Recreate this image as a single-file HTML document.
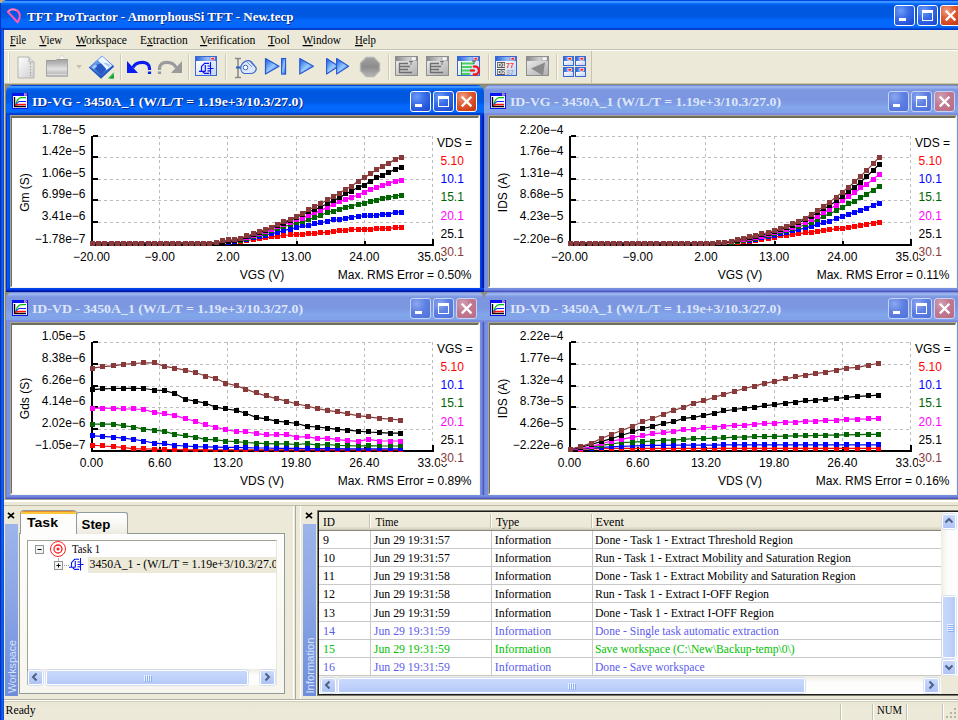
<!DOCTYPE html>
<html><head><meta charset="utf-8"><title>TFT ProTractor</title>
<style>
html,body{margin:0;padding:0}
body{width:958px;height:720px;overflow:hidden;position:relative;background:#ECE9D8;font-family:"Liberation Serif",serif;font-size:13px}
.b{position:absolute;display:block}
.t{position:absolute;line-height:1;white-space:nowrap}
u{text-decoration:underline;text-underline-offset:1px}
.g{stroke:#BCBCBC;stroke-width:1;stroke-dasharray:3 3;shape-rendering:crispEdges}
.ct{font-family:"Liberation Sans",sans-serif;font-size:12px}
svg{overflow:hidden}
</style></head>
<body>
<div class="b" style="left:0px;top:0px;width:958px;height:30px;background:linear-gradient(to bottom,#0046E0 1.67%,#3C96FF 5.00%,#3690FF 8.33%,#0A6EFC 11.67%,#0464F0 15.00%,#005CE6 18.33%,#0058E0 21.67%,#0058E0 51.67%,#005CE8 58.33%,#0264F6 65.00%,#0468FC 68.33%,#0468FE 88.33%,#0460F0 91.67%,#0044D6 95.00%,#003CCC 98.33%);border-top-left-radius:8px;"></div>
<div class="b" style="left:0px;top:0px;width:4px;height:4px;background:#BCAC7C;z-index:0"></div>
<div class="b" style="left:0px;top:0px;width:958px;height:30px;background:linear-gradient(to bottom,#0046E0 1.67%,#3C96FF 5.00%,#3690FF 8.33%,#0A6EFC 11.67%,#0464F0 15.00%,#005CE6 18.33%,#0058E0 21.67%,#0058E0 51.67%,#005CE8 58.33%,#0264F6 65.00%,#0468FC 68.33%,#0468FE 88.33%,#0460F0 91.67%,#0044D6 95.00%,#003CCC 98.33%);border-top-left-radius:7px;"></div>
<div class="b" style="left:0px;top:30px;width:4px;height:690px;background:linear-gradient(to right,#0A2FD0 0,#0A50E4 30%,#1060EC 60%,#0848D6 100%)"></div>
<div class="b" style="left:0px;top:3px;width:1px;height:717px;background:#0030C4"></div>
<svg class="b" style="left:4px;top:5px" width="20" height="20" viewBox="0 0 20 20"><path d="M3.9 6.9 L13.6 17.2 C16.4 13.2,17 8.2,12.6 5.2 C9.6 3.4,5.6 4.1,3.9 6.9 Z" fill="none" stroke="#FF58B4" stroke-width="2.1" stroke-linejoin="round"/><path d="M4.6 6.6 C6.4 4.4,9.6 4,12.2 5.6" fill="none" stroke="#FFA8D8" stroke-width="0.9"/></svg>
<div class="b" style="left:894px;top:5px;width:19px;height:19px;border:1px solid #fff;border-radius:3px;background:radial-gradient(circle at 30% 25%,#6C9CF8 0%,#3A6EE8 40%,#2454D8 75%,#1C46C4 100%);overflow:hidden"><div class="b" style="left:4px;top:12px;width:7px;height:3px;background:#fff"></div></div>
<div class="b" style="left:917px;top:5px;width:19px;height:19px;border:1px solid #fff;border-radius:3px;background:radial-gradient(circle at 30% 25%,#6C9CF8 0%,#3A6EE8 40%,#2454D8 75%,#1C46C4 100%);overflow:hidden"><div class="b" style="left:4px;top:4px;width:9px;height:7px;border:1px solid #fff;border-top-width:3px"></div></div>
<div class="b" style="left:940px;top:5px;width:19px;height:19px;border:1px solid #fff;border-radius:3px;background:radial-gradient(circle at 30% 25%,#F0A088 0%,#E0643C 35%,#D2441E 70%,#B83612 100%);overflow:hidden"><svg class="b" style="left:0;top:0" width="19" height="19"><path d="M4.8 4.8 L14.4 14.4 M14.4 4.8 L4.8 14.4" stroke="#fff" stroke-width="2.3" stroke-linecap="butt"/></svg></div>
<div class="b" style="left:4px;top:49px;width:954px;height:1px;background:#C5C2B2"></div>
<div class="b" style="left:4px;top:50px;width:954px;height:1px;background:#fff"></div>
<div class="b" style="left:591px;top:51px;width:1px;height:32px;background:#C5C2B2"></div>
<div class="b" style="left:8px;top:52px;width:1px;height:30px;background:#fff"></div>
<div class="b" style="left:9px;top:52px;width:1px;height:30px;background:#D8D4C2"></div>
<div class="b" style="left:120px;top:54px;width:1px;height:26px;background:#CFCBBA"></div>
<div class="b" style="left:121px;top:54px;width:1px;height:26px;background:#F8F7F0"></div>
<div class="b" style="left:188px;top:54px;width:1px;height:26px;background:#CFCBBA"></div>
<div class="b" style="left:189px;top:54px;width:1px;height:26px;background:#F8F7F0"></div>
<div class="b" style="left:225px;top:54px;width:1px;height:26px;background:#CFCBBA"></div>
<div class="b" style="left:226px;top:54px;width:1px;height:26px;background:#F8F7F0"></div>
<div class="b" style="left:388px;top:54px;width:1px;height:26px;background:#CFCBBA"></div>
<div class="b" style="left:389px;top:54px;width:1px;height:26px;background:#F8F7F0"></div>
<div class="b" style="left:488px;top:54px;width:1px;height:26px;background:#CFCBBA"></div>
<div class="b" style="left:489px;top:54px;width:1px;height:26px;background:#F8F7F0"></div>
<div class="b" style="left:556px;top:54px;width:1px;height:26px;background:#CFCBBA"></div>
<div class="b" style="left:557px;top:54px;width:1px;height:26px;background:#F8F7F0"></div>
<svg class="b" style="left:0;top:50px" width="958" height="34" viewBox="0 0 958 34"><defs>
<linearGradient id="gDoc" x1="0" y1="0" x2="1" y2="1"><stop offset="0" stop-color="#ffffff"/><stop offset="1" stop-color="#cdcdcd"/></linearGradient>
<linearGradient id="gGray" x1="0" y1="0" x2="0" y2="1"><stop offset="0" stop-color="#a4a4a4"/><stop offset="0.2" stop-color="#b4b4b4"/><stop offset="0.55" stop-color="#e2e2e2"/><stop offset="1" stop-color="#a8a8a8"/></linearGradient>
<linearGradient id="gBlueT" x1="0" y1="0" x2="1" y2="0"><stop offset="0" stop-color="#2a62d8"/><stop offset="0.6" stop-color="#9cc0f4"/><stop offset="1" stop-color="#3a6cd8"/></linearGradient>
<linearGradient id="gGrayT" x1="0" y1="0" x2="1" y2="0"><stop offset="0" stop-color="#8a8a8a"/><stop offset="0.6" stop-color="#d0d0d0"/><stop offset="1" stop-color="#8c8c8c"/></linearGradient>
<linearGradient id="gPlay" x1="0" y1="0" x2="0.9" y2="1"><stop offset="0" stop-color="#2458D8"/><stop offset="0.3" stop-color="#5C98F4"/><stop offset="0.55" stop-color="#9CCAFF"/><stop offset="0.8" stop-color="#5690F0"/><stop offset="1" stop-color="#2860DC"/></linearGradient>
<linearGradient id="gDia" x1="0.2" y1="0" x2="0.7" y2="1"><stop offset="0" stop-color="#8EC2FA"/><stop offset="0.45" stop-color="#4C88E4"/><stop offset="1" stop-color="#2458C4"/></linearGradient>
<linearGradient id="gBody" x1="0" y1="0" x2="1" y2="1"><stop offset="0" stop-color="#ffffff"/><stop offset="1" stop-color="#c4d4f0"/></linearGradient>
<linearGradient id="gBodyG" x1="0" y1="0" x2="1" y2="1"><stop offset="0" stop-color="#e8e8e8"/><stop offset="1" stop-color="#b0b0b0"/></linearGradient>
</defs><path d="M18 7 H29 L34 12 V28 H18 Z" fill="url(#gDoc)" stroke="#b4b4b4" stroke-width="1"/><path d="M29 7 V12 H34" fill="#e0e0e0" stroke="#b0b0b0"/><path d="M30.5 13 V26" stroke="#9c9c9c" stroke-dasharray="1.5 1.5"/><path d="M56.5 11.5 L61.5 5 L65.5 8.8 L63.5 12.5 Z" fill="#f6f6f6" stroke="#cfcfcf" stroke-width="0.8"/><path d="M46 10.5 H55 L57.5 9.5 H68 V26.5 H46 Z" fill="url(#gGray)"/><path d="M46 10.5 H55 L57.5 9.5 H68" fill="none" stroke="#9a9a9a" stroke-width="1"/><path d="M47 24.8 H67" stroke="#f0f0f0" stroke-width="1"/><path d="M46.5 11 V26 H67.5 V10" fill="none" stroke="#a6a6a6" stroke-width="1"/><path d="M76 15 H82 L79 18.5 Z" fill="#c4c1b2"/><path d="M102 5.8 L114.2 16.4 L101 28.8 L88.8 17.4 Z" fill="#1E4EB8"/><path d="M102 5.8 L113.4 15.8 L101 26.8 L89.6 17 Z" fill="url(#gDia)"/><path d="M98 10 L102.4 6.6 L112.2 15.4 L106.6 20 Z" fill="#EEF6FF"/><path d="M103.5 13.6 C105.5 12,108 12.8,110.4 15.2 L108.6 17 C106.6 15,105 14.6,103.5 13.6Z" fill="#A8CCF4"/><path d="M97.2 14.6 L101.4 13.4 L106 18.8 L101 24.4 L95.2 19.2 Z" fill="#2858C4"/><path d="M91.8 17 L95.2 14.4 L97.2 16.2 L93.6 19 Z" fill="#B4D4FA" opacity="0.85"/><path d="M113.8 22.2 V28.6 H107.8 Z" fill="#28B848"/><path d="M113.8 24.5 V28.6 H110 Z" fill="#1C9638"/><g><path d="M127 11 L127 23 L138 23 Z" fill="#0a1cf4"/><path d="M133 17.5 C136 11,149.5 10,149.5 18.5 L149.5 20" fill="none" stroke="#0a1cf4" stroke-width="3.2"/><path d="M147.9 21.5 V24 H151.1 V21.5Z" fill="#0a1cf4"/></g><g transform="translate(340 0) scale(-1 1)"><path d="M158 11 L158 23 L169 23 Z" fill="#9a9a9a"/><path d="M164 17.5 C167 11,180.5 10,180.5 18.5 L180.5 20" fill="none" stroke="#9a9a9a" stroke-width="3.2"/><path d="M178.9 21.5 V24 H182.1 V21.5Z" fill="#9a9a9a"/></g><rect x="195" y="6" width="22" height="20" fill="#3a68d0"/><rect x="196" y="7" width="20" height="4" fill="url(#gBlueT)"/><rect x="196" y="11" width="20" height="14" fill="url(#gBody)"/><rect x="211" y="7.5" width="3.5" height="2.5" fill="#ff2020" stroke="#fff" stroke-width="0.6"/><g transform="translate(199 12)" fill="none" stroke="#0A14F0" stroke-width="1.15"><path d="M0 9.3 H6.3 M2.5 9.3 V4.6 L5.6 1.3 H10 M3.8 9.8 L5.6 11.4 H10 M11.5 0 V12.5 M6.3 3 V9.5 M8.5 4 H11.5 M8.5 6.5 H14.5 M8.5 8.8 H11.5"/></g><g stroke="#8a8a8a" stroke-width="1.6" fill="none"><path d="M235 8.5 H241 M238 8.5 V27.5 M235 27.5 H241"/></g><path d="M236 17.5 H242" stroke="#2c5cc8" stroke-width="2"/><path d="M241 16 C243 11 248 9.5 251 11.5 L256 17.5 C257 21 254 23.5 250 23.5 H244 C241.5 22.5 240.5 19 241 16Z" fill="#dce8fa" stroke="#3c68c8" stroke-width="1.2"/><circle cx="245.5" cy="17.5" r="2.3" fill="#fff" stroke="#3c68c8"/><path d="M247 12 L252 17 M249.5 11.3 L254 16.2" stroke="#6c90dc" stroke-width="0.9"/><path d="M265.5 8.5 L279 16.3 L265.5 24 Z" fill="url(#gPlay)" stroke="#2458D0" stroke-width="1.2" stroke-linejoin="round"/><rect x="281.6" y="8.5" width="4" height="15.6" fill="url(#gPlay)" stroke="#2458D0" stroke-width="1.1"/><path d="M299.8 8.5 L313.4 16.3 L299.8 24 Z" fill="url(#gPlay)" stroke="#2458D0" stroke-width="1.2" stroke-linejoin="round"/><path d="M326.6 8.5 L338.6 16.3 L326.6 24 Z" fill="url(#gPlay)" stroke="#2458D0" stroke-width="1.1" stroke-linejoin="round"/><path d="M336.6 8.5 L348.6 16.3 L336.6 24 Z" fill="url(#gPlay)" stroke="#2458D0" stroke-width="1.1" stroke-linejoin="round"/><linearGradient id="gStop" x1="0" y1="0" x2="0" y2="1"><stop offset="0" stop-color="#a0a0a0"/><stop offset="0.5" stop-color="#8c8c8c"/><stop offset="1" stop-color="#b4b4b4"/></linearGradient><path d="M366.3 7.5 H373.7 L379.5 13.3 V20.7 L373.7 26.5 H366.3 L360.5 20.7 V13.3 Z" fill="url(#gStop)" stroke="#b4b4b4" stroke-width="1.4"/><rect x="395" y="6" width="23" height="20" fill="#8e8e8e"/><rect x="396" y="7" width="21" height="4" fill="url(#gGrayT)"/><rect x="396" y="11" width="21" height="14" fill="url(#gBodyG)"/><rect x="412" y="7.5" width="3.5" height="2.5" fill="#f0f0f0" stroke="#fff" stroke-width="0.6"/><g stroke="#6e6e6e" stroke-width="1.3"><path d="M399 13.5 H408 M399 16.5 H410 M399 19.5 H408 M399 22.5 H412 M399.5 13 V23"/></g><path d="M409 11.5 h4 m-2 0 v3.5" stroke="#777" stroke-width="1" fill="none"/><rect x="426" y="6" width="23" height="20" fill="#8e8e8e"/><rect x="427" y="7" width="21" height="4" fill="url(#gGrayT)"/><rect x="427" y="11" width="21" height="14" fill="url(#gBodyG)"/><rect x="443" y="7.5" width="3.5" height="2.5" fill="#f0f0f0" stroke="#fff" stroke-width="0.6"/><g stroke="#6e6e6e" stroke-width="1.3"><path d="M430 13.5 H439 M430 16.5 H441 M430 19.5 H439 M430 22.5 H443 M430.5 13 V23"/></g><path d="M440 11.5 h4 m-2 0 v3.5" stroke="#777" stroke-width="1" fill="none"/><rect x="457" y="6" width="23" height="20" fill="#3a68d0"/><rect x="458" y="7" width="21" height="4" fill="url(#gBlueT)"/><rect x="458" y="11" width="21" height="14" fill="url(#gBody)"/><rect x="474" y="7.5" width="3.5" height="2.5" fill="#ff2020" stroke="#fff" stroke-width="0.6"/><g stroke="#48d060" stroke-width="2.2"><path d="M461 13.5 H474 M461 17 H472 M461 20.5 H474 M461 24 H470"/></g><path d="M461.5 12 V25" stroke="#2a9a40" stroke-width="1"/><path d="M472 11 h4 m-2 0 v3" stroke="#555" stroke-width="1" fill="none"/><path d="M473 17 a4 4 0 1 1 0 7" fill="none" stroke="#ff1010" stroke-width="2.2"/><path d="M470 20.5 h5" stroke="#ff1010" stroke-width="2"/><rect x="495" y="6" width="22" height="20" fill="#3a68d0"/><rect x="496" y="7" width="20" height="4" fill="url(#gBlueT)"/><rect x="496" y="11" width="20" height="14" fill="url(#gBody)"/><rect x="511" y="7.5" width="3.5" height="2.5" fill="#ff2020" stroke="#fff" stroke-width="0.6"/><rect x="497" y="12" width="8" height="6" fill="#5a5a5a"/><rect x="497" y="19" width="8" height="6" fill="#5a5a5a"/><text x="497.5" y="17.3" font-size="6" font-weight="bold" fill="#fff" font-family="Liberation Sans">D1</text><text x="497.5" y="24.3" font-size="6" font-weight="bold" fill="#fff" font-family="Liberation Sans">D2</text><text x="506" y="17.8" font-size="7" font-weight="bold" fill="#f04040" font-family="Liberation Sans">77</text><text x="506" y="24.8" font-size="7" font-weight="bold" fill="#9ab" font-family="Liberation Sans">37</text><rect x="526" y="6" width="23" height="20" fill="#8e8e8e"/><rect x="527" y="7" width="21" height="4" fill="url(#gGrayT)"/><rect x="527" y="11" width="21" height="14" fill="url(#gBodyG)"/><rect x="543" y="7.5" width="3.5" height="2.5" fill="#f0f0f0" stroke="#fff" stroke-width="0.6"/><path d="M531 18.5 L545 12.5 L543 25.5 Z" fill="#8a8a8a"/><rect x="563" y="6" width="11" height="10" fill="#3a68d0"/><rect x="564" y="7" width="9" height="4" fill="url(#gBlueT)"/><rect x="564" y="11" width="9" height="4" fill="url(#gBody)"/><rect x="568" y="7.5" width="3.5" height="2.5" fill="#ff2020" stroke="#fff" stroke-width="0.6"/><rect x="575" y="6" width="11" height="10" fill="#3a68d0"/><rect x="576" y="7" width="9" height="4" fill="url(#gBlueT)"/><rect x="576" y="11" width="9" height="4" fill="url(#gBody)"/><rect x="580" y="7.5" width="3.5" height="2.5" fill="#ff2020" stroke="#fff" stroke-width="0.6"/><rect x="563" y="17" width="11" height="10" fill="#3a68d0"/><rect x="564" y="18" width="9" height="4" fill="url(#gBlueT)"/><rect x="564" y="22" width="9" height="4" fill="url(#gBody)"/><rect x="568" y="18.5" width="3.5" height="2.5" fill="#ff2020" stroke="#fff" stroke-width="0.6"/><rect x="575" y="17" width="11" height="10" fill="#3a68d0"/><rect x="576" y="18" width="9" height="4" fill="url(#gBlueT)"/><rect x="576" y="22" width="9" height="4" fill="url(#gBody)"/><rect x="580" y="18.5" width="3.5" height="2.5" fill="#ff2020" stroke="#fff" stroke-width="0.6"/></svg>
<div class="b" style="left:4px;top:83px;width:954px;height:1px;background:#CCC6A8"></div>
<div class="b" style="left:5px;top:84px;width:953px;height:1px;background:#8A8872"></div>
<div class="b" style="left:4px;top:84px;width:1px;height:416px;background:#CCC6A8"></div>
<div class="b" style="left:5px;top:85px;width:1px;height:415px;background:#8A8872"></div>
<div class="b" style="left:6px;top:85px;width:952px;height:414px;background:#8C8C80"></div>
<div class="b" style="left:484px;top:93px;width:477px;height:199px;background:#7890E0"></div>
<div class="b" style="left:484px;top:105px;width:4px;height:187px;background:linear-gradient(to right,#7080DC 12.50%,#7890E0 37.50%,#7890E0 62.50%,#7890E0 87.50%)"></div>
<div class="b" style="left:957px;top:105px;width:4px;height:187px;background:linear-gradient(to right,#7890E0 12.50%,#7088DE 37.50%,#6474D2 62.50%,#5058C0 87.50%)"></div>
<div class="b" style="left:484px;top:288px;width:477px;height:4px;background:linear-gradient(to bottom,#7890E0 12.50%,#7088DE 37.50%,#6474D2 62.50%,#5058C0 87.50%)"></div>
<div class="b" style="left:484px;top:85px;width:477px;height:30px;background:linear-gradient(to bottom,#7A90E0 1.67%,#98B0EC 5.00%,#9CB4EC 8.33%,#8CA6E8 11.67%,#829CE4 15.00%,#7C96E0 18.33%,#7C96E0 51.67%,#80A0E8 68.33%,#82A6EA 75.00%,#80A2E8 91.67%,#7C8EE0 95.00%,#7A88DE 98.33%);border-top-left-radius:7px;border-top-right-radius:7px;"></div>
<div class="b" style="left:488px;top:115px;width:469px;height:173px;background:#fff;box-sizing:border-box;border-top:1px solid #ACA494;border-left:1px solid #ACA494;border-right:1px solid #F4F4EE;border-bottom:1px solid #F4F4EE;"></div>
<div class="b" style="left:489px;top:116px;width:467px;height:171px;background:#fff;box-sizing:border-box;border-top:2px solid #6E6E5E;border-left:1px solid #6E6E5E;border-right:1px solid #fff;border-bottom:1px solid #fff;"></div>
<svg class="b" style="left:490px;top:117px" width="465" height="169" viewBox="0 0 465 169"><line x1="86" y1="19.5" x2="421" y2="19.5" class="g"/><line x1="86" y1="40.5" x2="421" y2="40.5" class="g"/><line x1="86" y1="62.5" x2="421" y2="62.5" class="g"/><line x1="86" y1="83.5" x2="421" y2="83.5" class="g"/><line x1="86" y1="105.5" x2="421" y2="105.5" class="g"/><line x1="147.5" y1="19" x2="147.5" y2="127" class="g"/><line x1="215.5" y1="19" x2="215.5" y2="127" class="g"/><line x1="284.5" y1="19" x2="284.5" y2="127" class="g"/><line x1="352.5" y1="19" x2="352.5" y2="127" class="g"/><line x1="420.5" y1="19" x2="420.5" y2="127" class="g"/><rect x="79" y="19" width="2" height="110" fill="#000"/><rect x="79" y="127" width="343" height="2" fill="#000"/><rect x="81" y="18" width="5" height="2" fill="#000"/><rect x="81" y="39" width="5" height="2" fill="#000"/><rect x="81" y="61" width="5" height="2" fill="#000"/><rect x="81" y="82" width="5" height="2" fill="#000"/><rect x="81" y="104" width="5" height="2" fill="#000"/><rect x="147" y="124" width="2" height="3" fill="#000"/><rect x="215" y="124" width="2" height="3" fill="#000"/><rect x="284" y="124" width="2" height="3" fill="#000"/><rect x="352" y="124" width="2" height="3" fill="#000"/><rect x="420" y="122" width="2" height="7" fill="#000"/><text x="73.5" y="17.0" text-anchor="end" class="ct">2.20e−4</text><text x="73.5" y="38.0" text-anchor="end" class="ct">1.76e−4</text><text x="73.5" y="60.0" text-anchor="end" class="ct">1.31e−4</text><text x="73.5" y="81.0" text-anchor="end" class="ct">8.68e−5</text><text x="73.5" y="103.0" text-anchor="end" class="ct">4.23e−5</text><text x="73.5" y="125.5" text-anchor="end" class="ct">−2.20e−6</text><text x="79.5" y="143.7" text-anchor="middle" class="ct">−20.00</text><text x="147.7" y="143.7" text-anchor="middle" class="ct">−9.00</text><text x="215.9" y="143.7" text-anchor="middle" class="ct">2.00</text><text x="284.1" y="143.7" text-anchor="middle" class="ct">13.00</text><text x="352.3" y="143.7" text-anchor="middle" class="ct">24.00</text><text x="420.5" y="143.7" text-anchor="middle" class="ct">35.00</text><text x="250" y="162" text-anchor="middle" class="ct">VGS (V)</text><text transform="translate(17 75.5) rotate(-90)" text-anchor="middle" class="ct">IDS (A)</text><text x="459.5" y="162" text-anchor="end" class="ct">Max. RMS Error = 0.11%</text><polyline fill="none" stroke="#FF0000" stroke-width="1.2" points="80.5,126.0 86.7,126.0 92.8,126.0 99.0,126.0 105.2,126.0 111.4,126.0 117.6,126.0 123.7,126.0 129.9,126.0 136.1,126.0 142.2,126.0 148.4,126.0 154.6,126.0 160.8,126.0 166.9,126.0 173.1,126.0 179.3,126.0 185.5,126.0 191.6,126.0 197.8,126.0 204.0,126.0 210.2,126.0 216.3,126.0 222.5,126.0 228.7,125.9 234.9,125.8 241.0,125.6 247.2,125.1 253.4,124.6 259.6,124.1 265.8,123.2 271.9,122.4 278.1,121.5 284.3,120.2 290.4,119.0 296.6,118.2 302.8,117.4 309.0,116.6 315.1,115.8 321.3,115.0 327.5,114.2 333.7,113.4 339.8,112.7 346.0,111.9 352.2,111.3 358.4,110.4 364.6,109.5 370.7,108.5 376.9,107.0 383.1,106.1 389.2,105.2"/><g fill="#FF0000"><rect x="78" y="124" width="5" height="5"/><rect x="84" y="124" width="5" height="5"/><rect x="90" y="124" width="5" height="5"/><rect x="97" y="124" width="5" height="5"/><rect x="103" y="124" width="5" height="5"/><rect x="109" y="124" width="5" height="5"/><rect x="115" y="124" width="5" height="5"/><rect x="121" y="124" width="5" height="5"/><rect x="127" y="124" width="5" height="5"/><rect x="134" y="124" width="5" height="5"/><rect x="140" y="124" width="5" height="5"/><rect x="146" y="124" width="5" height="5"/><rect x="152" y="124" width="5" height="5"/><rect x="158" y="124" width="5" height="5"/><rect x="164" y="124" width="5" height="5"/><rect x="171" y="124" width="5" height="5"/><rect x="177" y="124" width="5" height="5"/><rect x="183" y="124" width="5" height="5"/><rect x="189" y="124" width="5" height="5"/><rect x="195" y="124" width="5" height="5"/><rect x="202" y="124" width="5" height="5"/><rect x="208" y="124" width="5" height="5"/><rect x="214" y="124" width="5" height="5"/><rect x="220" y="124" width="5" height="5"/><rect x="226" y="123" width="5" height="5"/><rect x="232" y="123" width="5" height="5"/><rect x="239" y="123" width="5" height="5"/><rect x="245" y="123" width="5" height="5"/><rect x="251" y="122" width="5" height="5"/><rect x="257" y="122" width="5" height="5"/><rect x="263" y="121" width="5" height="5"/><rect x="269" y="120" width="5" height="5"/><rect x="276" y="119" width="5" height="5"/><rect x="282" y="118" width="5" height="5"/><rect x="288" y="116" width="5" height="5"/><rect x="294" y="116" width="5" height="5"/><rect x="300" y="115" width="5" height="5"/><rect x="306" y="114" width="5" height="5"/><rect x="313" y="113" width="5" height="5"/><rect x="319" y="113" width="5" height="5"/><rect x="325" y="112" width="5" height="5"/><rect x="331" y="111" width="5" height="5"/><rect x="337" y="110" width="5" height="5"/><rect x="344" y="109" width="5" height="5"/><rect x="350" y="109" width="5" height="5"/><rect x="356" y="108" width="5" height="5"/><rect x="362" y="107" width="5" height="5"/><rect x="368" y="106" width="5" height="5"/><rect x="374" y="105" width="5" height="5"/><rect x="381" y="104" width="5" height="5"/><rect x="387" y="103" width="5" height="5"/></g><polyline fill="none" stroke="#0000FF" stroke-width="1.2" points="80.5,126.0 86.7,126.0 92.8,126.0 99.0,126.0 105.2,126.0 111.4,126.0 117.6,126.0 123.7,126.0 129.9,126.0 136.1,126.0 142.2,126.0 148.4,126.0 154.6,126.0 160.8,126.0 166.9,126.0 173.1,126.0 179.3,126.0 185.5,126.0 191.6,126.0 197.8,126.0 204.0,126.0 210.2,126.0 216.3,126.0 222.5,126.0 228.7,125.8 234.9,125.7 241.0,125.3 247.2,124.6 253.4,124.0 259.6,123.2 265.8,122.1 271.9,120.9 278.1,119.8 284.3,118.1 290.4,116.5 296.6,115.2 302.8,113.9 309.0,112.5 315.1,110.9 321.3,109.3 327.5,107.2 333.7,105.9 339.8,104.0 346.0,101.8 352.2,99.8 358.4,97.1 364.6,95.2 370.7,93.2 376.9,91.1 383.1,88.2 389.2,86.1"/><g fill="#0000FF"><rect x="78" y="124" width="5" height="5"/><rect x="84" y="124" width="5" height="5"/><rect x="90" y="124" width="5" height="5"/><rect x="97" y="124" width="5" height="5"/><rect x="103" y="124" width="5" height="5"/><rect x="109" y="124" width="5" height="5"/><rect x="115" y="124" width="5" height="5"/><rect x="121" y="124" width="5" height="5"/><rect x="127" y="124" width="5" height="5"/><rect x="134" y="124" width="5" height="5"/><rect x="140" y="124" width="5" height="5"/><rect x="146" y="124" width="5" height="5"/><rect x="152" y="124" width="5" height="5"/><rect x="158" y="124" width="5" height="5"/><rect x="164" y="124" width="5" height="5"/><rect x="171" y="124" width="5" height="5"/><rect x="177" y="124" width="5" height="5"/><rect x="183" y="124" width="5" height="5"/><rect x="189" y="124" width="5" height="5"/><rect x="195" y="124" width="5" height="5"/><rect x="202" y="124" width="5" height="5"/><rect x="208" y="124" width="5" height="5"/><rect x="214" y="124" width="5" height="5"/><rect x="220" y="124" width="5" height="5"/><rect x="226" y="123" width="5" height="5"/><rect x="232" y="123" width="5" height="5"/><rect x="239" y="123" width="5" height="5"/><rect x="245" y="122" width="5" height="5"/><rect x="251" y="121" width="5" height="5"/><rect x="257" y="121" width="5" height="5"/><rect x="263" y="120" width="5" height="5"/><rect x="269" y="118" width="5" height="5"/><rect x="276" y="117" width="5" height="5"/><rect x="282" y="116" width="5" height="5"/><rect x="288" y="114" width="5" height="5"/><rect x="294" y="113" width="5" height="5"/><rect x="300" y="111" width="5" height="5"/><rect x="306" y="110" width="5" height="5"/><rect x="313" y="108" width="5" height="5"/><rect x="319" y="107" width="5" height="5"/><rect x="325" y="105" width="5" height="5"/><rect x="331" y="103" width="5" height="5"/><rect x="337" y="102" width="5" height="5"/><rect x="344" y="99" width="5" height="5"/><rect x="350" y="97" width="5" height="5"/><rect x="356" y="95" width="5" height="5"/><rect x="362" y="93" width="5" height="5"/><rect x="368" y="91" width="5" height="5"/><rect x="374" y="89" width="5" height="5"/><rect x="381" y="86" width="5" height="5"/><rect x="387" y="84" width="5" height="5"/></g><polyline fill="none" stroke="#006400" stroke-width="1.2" points="80.5,126.0 86.7,126.0 92.8,126.0 99.0,126.0 105.2,126.0 111.4,126.0 117.6,126.0 123.7,126.0 129.9,126.0 136.1,126.0 142.2,126.0 148.4,126.0 154.6,126.0 160.8,126.0 166.9,126.0 173.1,126.0 179.3,126.0 185.5,126.0 191.6,126.0 197.8,126.0 204.0,126.0 210.2,126.0 216.3,126.0 222.5,126.0 228.7,125.8 234.9,125.6 241.0,125.1 247.2,124.3 253.4,123.4 259.6,122.5 265.8,121.2 271.9,119.9 278.1,118.7 284.3,116.8 290.4,114.9 296.6,113.4 302.8,111.7 309.0,109.8 315.1,108.0 321.3,105.3 327.5,102.6 333.7,99.2 339.8,96.7 346.0,93.8 352.2,90.5 358.4,87.0 364.6,84.1 370.7,81.0 376.9,77.1 383.1,73.2 389.2,69.2"/><g fill="#006400"><rect x="78" y="124" width="5" height="5"/><rect x="84" y="124" width="5" height="5"/><rect x="90" y="124" width="5" height="5"/><rect x="97" y="124" width="5" height="5"/><rect x="103" y="124" width="5" height="5"/><rect x="109" y="124" width="5" height="5"/><rect x="115" y="124" width="5" height="5"/><rect x="121" y="124" width="5" height="5"/><rect x="127" y="124" width="5" height="5"/><rect x="134" y="124" width="5" height="5"/><rect x="140" y="124" width="5" height="5"/><rect x="146" y="124" width="5" height="5"/><rect x="152" y="124" width="5" height="5"/><rect x="158" y="124" width="5" height="5"/><rect x="164" y="124" width="5" height="5"/><rect x="171" y="124" width="5" height="5"/><rect x="177" y="124" width="5" height="5"/><rect x="183" y="124" width="5" height="5"/><rect x="189" y="124" width="5" height="5"/><rect x="195" y="124" width="5" height="5"/><rect x="202" y="124" width="5" height="5"/><rect x="208" y="124" width="5" height="5"/><rect x="214" y="124" width="5" height="5"/><rect x="220" y="124" width="5" height="5"/><rect x="226" y="123" width="5" height="5"/><rect x="232" y="123" width="5" height="5"/><rect x="239" y="123" width="5" height="5"/><rect x="245" y="122" width="5" height="5"/><rect x="251" y="121" width="5" height="5"/><rect x="257" y="120" width="5" height="5"/><rect x="263" y="119" width="5" height="5"/><rect x="269" y="117" width="5" height="5"/><rect x="276" y="116" width="5" height="5"/><rect x="282" y="114" width="5" height="5"/><rect x="288" y="112" width="5" height="5"/><rect x="294" y="111" width="5" height="5"/><rect x="300" y="109" width="5" height="5"/><rect x="306" y="107" width="5" height="5"/><rect x="313" y="105" width="5" height="5"/><rect x="319" y="103" width="5" height="5"/><rect x="325" y="100" width="5" height="5"/><rect x="331" y="97" width="5" height="5"/><rect x="337" y="94" width="5" height="5"/><rect x="344" y="91" width="5" height="5"/><rect x="350" y="88" width="5" height="5"/><rect x="356" y="84" width="5" height="5"/><rect x="362" y="82" width="5" height="5"/><rect x="368" y="78" width="5" height="5"/><rect x="374" y="75" width="5" height="5"/><rect x="381" y="71" width="5" height="5"/><rect x="387" y="67" width="5" height="5"/></g><polyline fill="none" stroke="#FF00FF" stroke-width="1.2" points="80.5,126.0 86.7,126.0 92.8,126.0 99.0,126.0 105.2,126.0 111.4,126.0 117.6,126.0 123.7,126.0 129.9,126.0 136.1,126.0 142.2,126.0 148.4,126.0 154.6,126.0 160.8,126.0 166.9,126.0 173.1,126.0 179.3,126.0 185.5,126.0 191.6,126.0 197.8,126.0 204.0,126.0 210.2,126.0 216.3,126.0 222.5,126.0 228.7,125.8 234.9,125.5 241.0,124.9 247.2,123.8 253.4,122.8 259.6,121.7 265.8,120.4 271.9,119.1 278.1,117.8 284.3,115.9 290.4,113.9 296.6,112.2 302.8,110.3 309.0,107.8 315.1,105.2 321.3,102.4 327.5,99.1 333.7,95.7 339.8,92.0 346.0,88.1 352.2,83.8 358.4,79.7 364.6,75.9 370.7,71.0 376.9,67.1 383.1,62.3 389.2,57.4"/><g fill="#FF00FF"><rect x="78" y="124" width="5" height="5"/><rect x="84" y="124" width="5" height="5"/><rect x="90" y="124" width="5" height="5"/><rect x="97" y="124" width="5" height="5"/><rect x="103" y="124" width="5" height="5"/><rect x="109" y="124" width="5" height="5"/><rect x="115" y="124" width="5" height="5"/><rect x="121" y="124" width="5" height="5"/><rect x="127" y="124" width="5" height="5"/><rect x="134" y="124" width="5" height="5"/><rect x="140" y="124" width="5" height="5"/><rect x="146" y="124" width="5" height="5"/><rect x="152" y="124" width="5" height="5"/><rect x="158" y="124" width="5" height="5"/><rect x="164" y="124" width="5" height="5"/><rect x="171" y="124" width="5" height="5"/><rect x="177" y="124" width="5" height="5"/><rect x="183" y="124" width="5" height="5"/><rect x="189" y="124" width="5" height="5"/><rect x="195" y="124" width="5" height="5"/><rect x="202" y="124" width="5" height="5"/><rect x="208" y="124" width="5" height="5"/><rect x="214" y="124" width="5" height="5"/><rect x="220" y="124" width="5" height="5"/><rect x="226" y="123" width="5" height="5"/><rect x="232" y="123" width="5" height="5"/><rect x="239" y="122" width="5" height="5"/><rect x="245" y="121" width="5" height="5"/><rect x="251" y="120" width="5" height="5"/><rect x="257" y="119" width="5" height="5"/><rect x="263" y="118" width="5" height="5"/><rect x="269" y="117" width="5" height="5"/><rect x="276" y="115" width="5" height="5"/><rect x="282" y="113" width="5" height="5"/><rect x="288" y="111" width="5" height="5"/><rect x="294" y="110" width="5" height="5"/><rect x="300" y="108" width="5" height="5"/><rect x="306" y="105" width="5" height="5"/><rect x="313" y="103" width="5" height="5"/><rect x="319" y="100" width="5" height="5"/><rect x="325" y="97" width="5" height="5"/><rect x="331" y="93" width="5" height="5"/><rect x="337" y="90" width="5" height="5"/><rect x="344" y="86" width="5" height="5"/><rect x="350" y="81" width="5" height="5"/><rect x="356" y="77" width="5" height="5"/><rect x="362" y="73" width="5" height="5"/><rect x="368" y="68" width="5" height="5"/><rect x="374" y="65" width="5" height="5"/><rect x="381" y="60" width="5" height="5"/><rect x="387" y="55" width="5" height="5"/></g><polyline fill="none" stroke="#000000" stroke-width="1.2" points="80.5,126.0 86.7,126.0 92.8,126.0 99.0,126.0 105.2,126.0 111.4,126.0 117.6,126.0 123.7,126.0 129.9,126.0 136.1,126.0 142.2,126.0 148.4,126.0 154.6,126.0 160.8,126.0 166.9,126.0 173.1,126.0 179.3,126.0 185.5,126.0 191.6,126.0 197.8,126.0 204.0,126.0 210.2,126.0 216.3,126.0 222.5,126.0 228.7,125.7 234.9,125.4 241.0,124.6 247.2,123.3 253.4,122.0 259.6,120.6 265.8,119.3 271.9,117.9 278.1,116.5 284.3,114.5 290.4,112.4 296.6,110.2 302.8,108.1 309.0,105.5 315.1,102.6 321.3,99.2 327.5,95.4 333.7,91.7 339.8,88.5 346.0,84.0 352.2,79.6 358.4,74.5 364.6,70.0 370.7,65.0 376.9,59.3 383.1,53.2 389.2,47.4"/><g fill="#000000"><rect x="78" y="124" width="5" height="5"/><rect x="84" y="124" width="5" height="5"/><rect x="90" y="124" width="5" height="5"/><rect x="97" y="124" width="5" height="5"/><rect x="103" y="124" width="5" height="5"/><rect x="109" y="124" width="5" height="5"/><rect x="115" y="124" width="5" height="5"/><rect x="121" y="124" width="5" height="5"/><rect x="127" y="124" width="5" height="5"/><rect x="134" y="124" width="5" height="5"/><rect x="140" y="124" width="5" height="5"/><rect x="146" y="124" width="5" height="5"/><rect x="152" y="124" width="5" height="5"/><rect x="158" y="124" width="5" height="5"/><rect x="164" y="124" width="5" height="5"/><rect x="171" y="124" width="5" height="5"/><rect x="177" y="124" width="5" height="5"/><rect x="183" y="124" width="5" height="5"/><rect x="189" y="124" width="5" height="5"/><rect x="195" y="124" width="5" height="5"/><rect x="202" y="124" width="5" height="5"/><rect x="208" y="124" width="5" height="5"/><rect x="214" y="124" width="5" height="5"/><rect x="220" y="124" width="5" height="5"/><rect x="226" y="123" width="5" height="5"/><rect x="232" y="123" width="5" height="5"/><rect x="239" y="122" width="5" height="5"/><rect x="245" y="121" width="5" height="5"/><rect x="251" y="119" width="5" height="5"/><rect x="257" y="118" width="5" height="5"/><rect x="263" y="117" width="5" height="5"/><rect x="269" y="115" width="5" height="5"/><rect x="276" y="114" width="5" height="5"/><rect x="282" y="112" width="5" height="5"/><rect x="288" y="110" width="5" height="5"/><rect x="294" y="108" width="5" height="5"/><rect x="300" y="106" width="5" height="5"/><rect x="306" y="103" width="5" height="5"/><rect x="313" y="100" width="5" height="5"/><rect x="319" y="97" width="5" height="5"/><rect x="325" y="93" width="5" height="5"/><rect x="331" y="89" width="5" height="5"/><rect x="337" y="86" width="5" height="5"/><rect x="344" y="81" width="5" height="5"/><rect x="350" y="77" width="5" height="5"/><rect x="356" y="72" width="5" height="5"/><rect x="362" y="68" width="5" height="5"/><rect x="368" y="63" width="5" height="5"/><rect x="374" y="57" width="5" height="5"/><rect x="381" y="51" width="5" height="5"/><rect x="387" y="45" width="5" height="5"/></g><polyline fill="none" stroke="#883A3A" stroke-width="1.2" points="80.5,126.0 86.7,126.0 92.8,126.0 99.0,126.0 105.2,126.0 111.4,126.0 117.6,126.0 123.7,126.0 129.9,126.0 136.1,126.0 142.2,126.0 148.4,126.0 154.6,126.0 160.8,126.0 166.9,126.0 173.1,126.0 179.3,126.0 185.5,126.0 191.6,126.0 197.8,126.0 204.0,126.0 210.2,126.0 216.3,126.0 222.5,126.0 228.7,125.6 234.9,125.2 241.0,124.2 247.2,122.7 253.4,121.2 259.6,119.6 265.8,118.3 271.9,116.9 278.1,115.5 284.3,113.5 290.4,111.4 296.6,109.1 302.8,106.8 309.0,104.1 315.1,101.1 321.3,97.4 327.5,93.5 333.7,89.4 339.8,85.0 346.0,80.1 352.2,75.2 358.4,70.3 364.6,65.0 370.7,59.0 376.9,53.1 383.1,46.9 389.2,40.2"/><g fill="#883A3A"><rect x="78" y="124" width="5" height="5"/><rect x="84" y="124" width="5" height="5"/><rect x="90" y="124" width="5" height="5"/><rect x="97" y="124" width="5" height="5"/><rect x="103" y="124" width="5" height="5"/><rect x="109" y="124" width="5" height="5"/><rect x="115" y="124" width="5" height="5"/><rect x="121" y="124" width="5" height="5"/><rect x="127" y="124" width="5" height="5"/><rect x="134" y="124" width="5" height="5"/><rect x="140" y="124" width="5" height="5"/><rect x="146" y="124" width="5" height="5"/><rect x="152" y="124" width="5" height="5"/><rect x="158" y="124" width="5" height="5"/><rect x="164" y="124" width="5" height="5"/><rect x="171" y="124" width="5" height="5"/><rect x="177" y="124" width="5" height="5"/><rect x="183" y="124" width="5" height="5"/><rect x="189" y="124" width="5" height="5"/><rect x="195" y="124" width="5" height="5"/><rect x="202" y="124" width="5" height="5"/><rect x="208" y="124" width="5" height="5"/><rect x="214" y="124" width="5" height="5"/><rect x="220" y="124" width="5" height="5"/><rect x="226" y="123" width="5" height="5"/><rect x="232" y="123" width="5" height="5"/><rect x="239" y="122" width="5" height="5"/><rect x="245" y="120" width="5" height="5"/><rect x="251" y="119" width="5" height="5"/><rect x="257" y="117" width="5" height="5"/><rect x="263" y="116" width="5" height="5"/><rect x="269" y="114" width="5" height="5"/><rect x="276" y="113" width="5" height="5"/><rect x="282" y="111" width="5" height="5"/><rect x="288" y="109" width="5" height="5"/><rect x="294" y="107" width="5" height="5"/><rect x="300" y="104" width="5" height="5"/><rect x="306" y="102" width="5" height="5"/><rect x="313" y="99" width="5" height="5"/><rect x="319" y="95" width="5" height="5"/><rect x="325" y="91" width="5" height="5"/><rect x="331" y="87" width="5" height="5"/><rect x="337" y="83" width="5" height="5"/><rect x="344" y="78" width="5" height="5"/><rect x="350" y="73" width="5" height="5"/><rect x="356" y="68" width="5" height="5"/><rect x="362" y="62" width="5" height="5"/><rect x="368" y="57" width="5" height="5"/><rect x="374" y="51" width="5" height="5"/><rect x="381" y="44" width="5" height="5"/><rect x="387" y="38" width="5" height="5"/></g><text x="425" y="30" class="ct">VDS =</text><text x="428.5" y="48.0" class="ct" fill="#FF0000">5.10</text><text x="428.5" y="66.2" class="ct" fill="#0000FF">10.1</text><text x="428.5" y="84.4" class="ct" fill="#006400">15.1</text><text x="428.5" y="102.6" class="ct" fill="#FF00FF">20.1</text><text x="428.5" y="120.8" class="ct" fill="#000000">25.1</text><rect x="428" y="129.0" width="26" height="12" fill="#fff"/><text x="428.5" y="139.0" class="ct" fill="#883A3A">30.1</text></svg>
<svg class="b" style="left:490px;top:93px" width="16" height="16" viewBox="0 0 16 16"><rect width="16" height="16" fill="#0A14F0"/><rect x="1" y="3" width="14" height="12" fill="#fff"/><rect x="12.5" y="0.8" width="2.2" height="1.4" fill="#ff3030" stroke="#fff" stroke-width="0.5"/><path d="M2.5 4 V13.5 H14" stroke="#000" stroke-width="1.4" fill="none"/><path d="M3.5 12.5 C4.5 8 6.5 4.8 9 4.6 H14" stroke="#00c000" stroke-width="1.2" fill="none"/><path d="M3.5 12.5 C5 10 6 8.6 7.5 8.5 H14" stroke="#1020ff" stroke-width="1.2" fill="none"/><path d="M3 12.5 C5 11.6 6 11.5 7 11.5 H14" stroke="#ff1010" stroke-width="1.3" fill="none"/></svg>
<div class="b" style="left:888px;top:91px;width:19px;height:19px;border:1px solid #C8D4F4;border-radius:3px;background:radial-gradient(circle at 30% 25%,#8CA8F0 0%,#5E80E2 45%,#4F72DA 100%);overflow:hidden"><div class="b" style="left:4px;top:12px;width:7px;height:3px;background:#fff"></div></div>
<div class="b" style="left:911px;top:91px;width:19px;height:19px;border:1px solid #C8D4F4;border-radius:3px;background:radial-gradient(circle at 30% 25%,#8CA8F0 0%,#5E80E2 45%,#4F72DA 100%);overflow:hidden"><div class="b" style="left:4px;top:4px;width:9px;height:7px;border:1px solid #fff;border-top-width:3px"></div></div>
<div class="b" style="left:934px;top:91px;width:19px;height:19px;border:1px solid #C8D4F4;border-radius:3px;background:radial-gradient(circle at 30% 25%,#D0A0B4 0%,#C07890 45%,#B86C86 100%);overflow:hidden"><svg class="b" style="left:0;top:0" width="19" height="19"><path d="M4.8 4.8 L14.4 14.4 M14.4 4.8 L4.8 14.4" stroke="#fff" stroke-width="2.3" stroke-linecap="butt"/></svg></div>
<div class="b" style="left:6px;top:300px;width:478px;height:199px;background:#7890E0"></div>
<div class="b" style="left:6px;top:312px;width:4px;height:187px;background:linear-gradient(to right,#7080DC 12.50%,#7890E0 37.50%,#7890E0 62.50%,#7890E0 87.50%)"></div>
<div class="b" style="left:480px;top:312px;width:4px;height:187px;background:linear-gradient(to right,#7890E0 12.50%,#7088DE 37.50%,#6474D2 62.50%,#5058C0 87.50%)"></div>
<div class="b" style="left:6px;top:495px;width:478px;height:4px;background:linear-gradient(to bottom,#7890E0 12.50%,#7088DE 37.50%,#6474D2 62.50%,#5058C0 87.50%)"></div>
<div class="b" style="left:6px;top:292px;width:478px;height:30px;background:linear-gradient(to bottom,#7A90E0 1.67%,#98B0EC 5.00%,#9CB4EC 8.33%,#8CA6E8 11.67%,#829CE4 15.00%,#7C96E0 18.33%,#7C96E0 51.67%,#80A0E8 68.33%,#82A6EA 75.00%,#80A2E8 91.67%,#7C8EE0 95.00%,#7A88DE 98.33%);border-top-left-radius:7px;border-top-right-radius:7px;"></div>
<div class="b" style="left:10px;top:322px;width:470px;height:173px;background:#fff;box-sizing:border-box;border-top:1px solid #ACA494;border-left:1px solid #ACA494;border-right:1px solid #F4F4EE;border-bottom:1px solid #F4F4EE;"></div>
<div class="b" style="left:11px;top:323px;width:468px;height:171px;background:#fff;box-sizing:border-box;border-top:2px solid #6E6E5E;border-left:1px solid #6E6E5E;border-right:1px solid #fff;border-bottom:1px solid #fff;"></div>
<svg class="b" style="left:12px;top:324px" width="466" height="169" viewBox="0 0 466 169"><line x1="86" y1="18.5" x2="421" y2="18.5" class="g"/><line x1="86" y1="40.5" x2="421" y2="40.5" class="g"/><line x1="86" y1="62.5" x2="421" y2="62.5" class="g"/><line x1="86" y1="83.5" x2="421" y2="83.5" class="g"/><line x1="86" y1="105.5" x2="421" y2="105.5" class="g"/><line x1="147.5" y1="18" x2="147.5" y2="126" class="g"/><line x1="215.5" y1="18" x2="215.5" y2="126" class="g"/><line x1="284.5" y1="18" x2="284.5" y2="126" class="g"/><line x1="352.5" y1="18" x2="352.5" y2="126" class="g"/><line x1="420.5" y1="18" x2="420.5" y2="126" class="g"/><rect x="79" y="18" width="2" height="110" fill="#000"/><rect x="79" y="126" width="343" height="2" fill="#000"/><rect x="81" y="17" width="5" height="2" fill="#000"/><rect x="81" y="39" width="5" height="2" fill="#000"/><rect x="81" y="61" width="5" height="2" fill="#000"/><rect x="81" y="82" width="5" height="2" fill="#000"/><rect x="81" y="104" width="5" height="2" fill="#000"/><rect x="147" y="123" width="2" height="3" fill="#000"/><rect x="215" y="123" width="2" height="3" fill="#000"/><rect x="284" y="123" width="2" height="3" fill="#000"/><rect x="352" y="123" width="2" height="3" fill="#000"/><rect x="420" y="121" width="2" height="7" fill="#000"/><text x="73.5" y="16.0" text-anchor="end" class="ct">1.05e−5</text><text x="73.5" y="38.0" text-anchor="end" class="ct">8.38e−6</text><text x="73.5" y="60.0" text-anchor="end" class="ct">6.26e−6</text><text x="73.5" y="81.0" text-anchor="end" class="ct">4.14e−6</text><text x="73.5" y="103.0" text-anchor="end" class="ct">2.02e−6</text><text x="73.5" y="124.5" text-anchor="end" class="ct">−1.05e−7</text><text x="79.5" y="142.7" text-anchor="middle" class="ct">0.00</text><text x="147.7" y="142.7" text-anchor="middle" class="ct">6.60</text><text x="215.9" y="142.7" text-anchor="middle" class="ct">13.20</text><text x="284.1" y="142.7" text-anchor="middle" class="ct">19.80</text><text x="352.3" y="142.7" text-anchor="middle" class="ct">26.40</text><text x="420.5" y="142.7" text-anchor="middle" class="ct">33.00</text><text x="250" y="161" text-anchor="middle" class="ct">VDS (V)</text><text transform="translate(17 74.5) rotate(-90)" text-anchor="middle" class="ct">Gds (S)</text><text x="459.5" y="161" text-anchor="end" class="ct">Max. RMS Error = 0.89%</text><polyline fill="none" stroke="#FF0000" stroke-width="1.2" points="80.7,121.1 90.6,122.0 101.1,122.6 111.0,123.4 121.5,124.9 131.7,124.9 142.5,125.2 152.7,125.5 162.9,125.5 173.1,125.8 183.3,125.8 193.5,125.8 203.7,125.8 213.9,125.8 224.2,125.8 233.8,125.8 244.0,125.8 254.2,125.8 264.4,125.8 274.6,125.8 284.9,125.8 295.1,125.8 305.3,125.8 315.5,125.8 325.7,125.8 335.9,125.8 346.1,125.8 356.3,125.8 367.9,125.8 378.1,125.8 388.3,125.8"/><g fill="#FF0000"><rect x="78" y="119" width="5" height="5"/><rect x="88" y="119" width="5" height="5"/><rect x="99" y="120" width="5" height="5"/><rect x="109" y="121" width="5" height="5"/><rect x="119" y="122" width="5" height="5"/><rect x="129" y="122" width="5" height="5"/><rect x="140" y="123" width="5" height="5"/><rect x="150" y="123" width="5" height="5"/><rect x="160" y="123" width="5" height="5"/><rect x="171" y="123" width="5" height="5"/><rect x="181" y="123" width="5" height="5"/><rect x="191" y="123" width="5" height="5"/><rect x="201" y="123" width="5" height="5"/><rect x="211" y="123" width="5" height="5"/><rect x="222" y="123" width="5" height="5"/><rect x="231" y="123" width="5" height="5"/><rect x="242" y="123" width="5" height="5"/><rect x="252" y="123" width="5" height="5"/><rect x="262" y="123" width="5" height="5"/><rect x="272" y="123" width="5" height="5"/><rect x="282" y="123" width="5" height="5"/><rect x="293" y="123" width="5" height="5"/><rect x="303" y="123" width="5" height="5"/><rect x="313" y="123" width="5" height="5"/><rect x="323" y="123" width="5" height="5"/><rect x="333" y="123" width="5" height="5"/><rect x="344" y="123" width="5" height="5"/><rect x="354" y="123" width="5" height="5"/><rect x="365" y="123" width="5" height="5"/><rect x="376" y="123" width="5" height="5"/><rect x="386" y="123" width="5" height="5"/></g><polyline fill="none" stroke="#0000FF" stroke-width="1.2" points="80.7,111.8 90.6,112.4 101.1,113.2 111.0,114.1 121.5,115.3 131.7,117.0 142.5,119.1 152.7,119.9 162.9,121.4 173.1,122.0 183.3,122.6 193.5,122.9 203.7,123.1 213.9,123.4 224.2,123.4 233.8,123.7 244.0,124.0 254.2,124.0 264.4,124.3 274.6,124.3 284.9,124.3 295.1,124.6 305.3,124.6 315.5,124.6 325.7,124.6 335.9,124.9 346.1,124.9 356.3,124.9 367.9,124.9 378.1,124.9 388.3,124.9"/><g fill="#0000FF"><rect x="78" y="109" width="5" height="5"/><rect x="88" y="110" width="5" height="5"/><rect x="99" y="111" width="5" height="5"/><rect x="109" y="112" width="5" height="5"/><rect x="119" y="113" width="5" height="5"/><rect x="129" y="115" width="5" height="5"/><rect x="140" y="117" width="5" height="5"/><rect x="150" y="117" width="5" height="5"/><rect x="160" y="119" width="5" height="5"/><rect x="171" y="119" width="5" height="5"/><rect x="181" y="120" width="5" height="5"/><rect x="191" y="120" width="5" height="5"/><rect x="201" y="121" width="5" height="5"/><rect x="211" y="121" width="5" height="5"/><rect x="222" y="121" width="5" height="5"/><rect x="231" y="121" width="5" height="5"/><rect x="242" y="122" width="5" height="5"/><rect x="252" y="122" width="5" height="5"/><rect x="262" y="122" width="5" height="5"/><rect x="272" y="122" width="5" height="5"/><rect x="282" y="122" width="5" height="5"/><rect x="293" y="122" width="5" height="5"/><rect x="303" y="122" width="5" height="5"/><rect x="313" y="122" width="5" height="5"/><rect x="323" y="122" width="5" height="5"/><rect x="333" y="122" width="5" height="5"/><rect x="344" y="122" width="5" height="5"/><rect x="354" y="122" width="5" height="5"/><rect x="365" y="122" width="5" height="5"/><rect x="376" y="122" width="5" height="5"/><rect x="386" y="122" width="5" height="5"/></g><polyline fill="none" stroke="#006400" stroke-width="1.2" points="80.7,100.1 90.6,100.1 101.1,100.1 111.0,101.6 121.5,103.0 131.7,105.1 142.5,106.2 152.7,107.4 162.9,110.3 173.1,111.8 183.3,113.2 193.5,115.3 203.7,115.9 213.9,117.0 224.2,117.6 233.8,118.5 244.0,119.1 254.2,119.6 264.4,119.9 274.6,119.9 284.9,120.5 295.1,119.6 305.3,121.1 315.5,120.5 325.7,121.4 335.9,121.7 346.1,122.0 356.3,121.7 367.9,122.0 378.1,122.0 388.3,122.0"/><g fill="#006400"><rect x="78" y="98" width="5" height="5"/><rect x="88" y="98" width="5" height="5"/><rect x="99" y="98" width="5" height="5"/><rect x="109" y="99" width="5" height="5"/><rect x="119" y="101" width="5" height="5"/><rect x="129" y="103" width="5" height="5"/><rect x="140" y="104" width="5" height="5"/><rect x="150" y="105" width="5" height="5"/><rect x="160" y="108" width="5" height="5"/><rect x="171" y="109" width="5" height="5"/><rect x="181" y="111" width="5" height="5"/><rect x="191" y="113" width="5" height="5"/><rect x="201" y="113" width="5" height="5"/><rect x="211" y="115" width="5" height="5"/><rect x="222" y="115" width="5" height="5"/><rect x="231" y="116" width="5" height="5"/><rect x="242" y="117" width="5" height="5"/><rect x="252" y="117" width="5" height="5"/><rect x="262" y="117" width="5" height="5"/><rect x="272" y="117" width="5" height="5"/><rect x="282" y="118" width="5" height="5"/><rect x="293" y="117" width="5" height="5"/><rect x="303" y="119" width="5" height="5"/><rect x="313" y="118" width="5" height="5"/><rect x="323" y="119" width="5" height="5"/><rect x="333" y="119" width="5" height="5"/><rect x="344" y="119" width="5" height="5"/><rect x="354" y="119" width="5" height="5"/><rect x="365" y="119" width="5" height="5"/><rect x="376" y="119" width="5" height="5"/><rect x="386" y="119" width="5" height="5"/></g><polyline fill="none" stroke="#FF00FF" stroke-width="1.2" points="80.7,84.1 90.6,84.1 101.1,84.4 111.0,85.0 121.5,85.0 131.7,85.5 142.5,88.4 152.7,89.9 162.9,91.4 173.1,94.6 183.3,97.2 193.5,101.0 203.7,103.0 213.9,105.9 224.2,107.4 233.8,108.0 244.0,109.4 254.2,110.9 264.4,110.9 274.6,110.3 284.9,113.2 295.1,112.6 305.3,114.7 315.5,114.1 325.7,115.6 335.9,116.7 346.1,117.3 356.3,115.3 367.9,117.0 378.1,117.0 388.3,117.0"/><g fill="#FF00FF"><rect x="78" y="82" width="5" height="5"/><rect x="88" y="82" width="5" height="5"/><rect x="99" y="82" width="5" height="5"/><rect x="109" y="82" width="5" height="5"/><rect x="119" y="82" width="5" height="5"/><rect x="129" y="83" width="5" height="5"/><rect x="140" y="86" width="5" height="5"/><rect x="150" y="87" width="5" height="5"/><rect x="160" y="89" width="5" height="5"/><rect x="171" y="92" width="5" height="5"/><rect x="181" y="95" width="5" height="5"/><rect x="191" y="98" width="5" height="5"/><rect x="201" y="101" width="5" height="5"/><rect x="211" y="103" width="5" height="5"/><rect x="222" y="105" width="5" height="5"/><rect x="231" y="105" width="5" height="5"/><rect x="242" y="107" width="5" height="5"/><rect x="252" y="108" width="5" height="5"/><rect x="262" y="108" width="5" height="5"/><rect x="272" y="108" width="5" height="5"/><rect x="282" y="111" width="5" height="5"/><rect x="293" y="110" width="5" height="5"/><rect x="303" y="112" width="5" height="5"/><rect x="313" y="112" width="5" height="5"/><rect x="323" y="113" width="5" height="5"/><rect x="333" y="114" width="5" height="5"/><rect x="344" y="115" width="5" height="5"/><rect x="354" y="113" width="5" height="5"/><rect x="365" y="115" width="5" height="5"/><rect x="376" y="115" width="5" height="5"/><rect x="386" y="115" width="5" height="5"/></g><polyline fill="none" stroke="#000000" stroke-width="1.2" points="80.7,65.7 90.6,64.8 101.1,64.5 111.0,64.3 121.5,64.3 131.7,64.5 142.5,66.0 152.7,66.6 162.9,69.5 173.1,75.3 183.3,77.1 193.5,79.1 203.7,83.2 213.9,85.0 224.2,86.4 233.8,89.3 244.0,93.4 254.2,94.9 264.4,97.2 274.6,98.1 284.9,99.5 295.1,102.4 305.3,103.0 315.5,104.2 325.7,105.4 335.9,106.2 346.1,107.1 356.3,108.0 367.9,108.6 378.1,109.1 388.3,109.1"/><g fill="#000000"><rect x="78" y="63" width="5" height="5"/><rect x="88" y="62" width="5" height="5"/><rect x="99" y="62" width="5" height="5"/><rect x="109" y="62" width="5" height="5"/><rect x="119" y="62" width="5" height="5"/><rect x="129" y="62" width="5" height="5"/><rect x="140" y="64" width="5" height="5"/><rect x="150" y="64" width="5" height="5"/><rect x="160" y="67" width="5" height="5"/><rect x="171" y="73" width="5" height="5"/><rect x="181" y="75" width="5" height="5"/><rect x="191" y="77" width="5" height="5"/><rect x="201" y="81" width="5" height="5"/><rect x="211" y="82" width="5" height="5"/><rect x="222" y="84" width="5" height="5"/><rect x="231" y="87" width="5" height="5"/><rect x="242" y="91" width="5" height="5"/><rect x="252" y="92" width="5" height="5"/><rect x="262" y="95" width="5" height="5"/><rect x="272" y="96" width="5" height="5"/><rect x="282" y="97" width="5" height="5"/><rect x="293" y="100" width="5" height="5"/><rect x="303" y="101" width="5" height="5"/><rect x="313" y="102" width="5" height="5"/><rect x="323" y="103" width="5" height="5"/><rect x="333" y="104" width="5" height="5"/><rect x="344" y="105" width="5" height="5"/><rect x="354" y="105" width="5" height="5"/><rect x="365" y="106" width="5" height="5"/><rect x="376" y="107" width="5" height="5"/><rect x="386" y="107" width="5" height="5"/></g><polyline fill="none" stroke="#883A3A" stroke-width="1.2" points="80.7,44.1 90.6,42.7 101.1,41.8 111.0,40.3 121.5,39.5 131.7,38.9 142.5,38.9 152.7,42.4 162.9,44.1 173.1,46.2 183.3,48.5 193.5,52.0 203.7,54.3 213.9,59.3 224.2,61.6 233.8,65.1 244.0,68.9 254.2,71.8 264.4,74.7 274.6,77.1 284.9,80.0 295.1,82.0 305.3,84.7 315.5,86.4 325.7,87.9 335.9,89.9 346.1,91.7 356.3,92.8 367.9,94.3 378.1,95.2 388.3,96.0"/><g fill="#883A3A"><rect x="78" y="42" width="5" height="5"/><rect x="88" y="40" width="5" height="5"/><rect x="99" y="39" width="5" height="5"/><rect x="109" y="38" width="5" height="5"/><rect x="119" y="37" width="5" height="5"/><rect x="129" y="36" width="5" height="5"/><rect x="140" y="36" width="5" height="5"/><rect x="150" y="40" width="5" height="5"/><rect x="160" y="42" width="5" height="5"/><rect x="171" y="44" width="5" height="5"/><rect x="181" y="46" width="5" height="5"/><rect x="191" y="50" width="5" height="5"/><rect x="201" y="52" width="5" height="5"/><rect x="211" y="57" width="5" height="5"/><rect x="222" y="59" width="5" height="5"/><rect x="231" y="63" width="5" height="5"/><rect x="242" y="66" width="5" height="5"/><rect x="252" y="69" width="5" height="5"/><rect x="262" y="72" width="5" height="5"/><rect x="272" y="75" width="5" height="5"/><rect x="282" y="77" width="5" height="5"/><rect x="293" y="80" width="5" height="5"/><rect x="303" y="82" width="5" height="5"/><rect x="313" y="84" width="5" height="5"/><rect x="323" y="85" width="5" height="5"/><rect x="333" y="87" width="5" height="5"/><rect x="344" y="89" width="5" height="5"/><rect x="354" y="90" width="5" height="5"/><rect x="365" y="92" width="5" height="5"/><rect x="376" y="93" width="5" height="5"/><rect x="386" y="94" width="5" height="5"/></g><text x="425" y="29" class="ct">VGS =</text><text x="428.5" y="47.0" class="ct" fill="#FF0000">5.10</text><text x="428.5" y="65.2" class="ct" fill="#0000FF">10.1</text><text x="428.5" y="83.4" class="ct" fill="#006400">15.1</text><text x="428.5" y="101.6" class="ct" fill="#FF00FF">20.1</text><text x="428.5" y="119.8" class="ct" fill="#000000">25.1</text><rect x="428" y="128.0" width="26" height="12" fill="#fff"/><text x="428.5" y="138.0" class="ct" fill="#883A3A">30.1</text></svg>
<svg class="b" style="left:12px;top:300px" width="16" height="16" viewBox="0 0 16 16"><rect width="16" height="16" fill="#0A14F0"/><rect x="1" y="3" width="14" height="12" fill="#fff"/><rect x="12.5" y="0.8" width="2.2" height="1.4" fill="#ff3030" stroke="#fff" stroke-width="0.5"/><path d="M2.5 4 V13.5 H14" stroke="#000" stroke-width="1.4" fill="none"/><path d="M3.5 12.5 C4.5 8 6.5 4.8 9 4.6 H14" stroke="#00c000" stroke-width="1.2" fill="none"/><path d="M3.5 12.5 C5 10 6 8.6 7.5 8.5 H14" stroke="#1020ff" stroke-width="1.2" fill="none"/><path d="M3 12.5 C5 11.6 6 11.5 7 11.5 H14" stroke="#ff1010" stroke-width="1.3" fill="none"/></svg>
<div class="b" style="left:410px;top:298px;width:19px;height:19px;border:1px solid #C8D4F4;border-radius:3px;background:radial-gradient(circle at 30% 25%,#8CA8F0 0%,#5E80E2 45%,#4F72DA 100%);overflow:hidden"><div class="b" style="left:4px;top:12px;width:7px;height:3px;background:#fff"></div></div>
<div class="b" style="left:433px;top:298px;width:19px;height:19px;border:1px solid #C8D4F4;border-radius:3px;background:radial-gradient(circle at 30% 25%,#8CA8F0 0%,#5E80E2 45%,#4F72DA 100%);overflow:hidden"><div class="b" style="left:4px;top:4px;width:9px;height:7px;border:1px solid #fff;border-top-width:3px"></div></div>
<div class="b" style="left:456px;top:298px;width:19px;height:19px;border:1px solid #C8D4F4;border-radius:3px;background:radial-gradient(circle at 30% 25%,#D0A0B4 0%,#C07890 45%,#B86C86 100%);overflow:hidden"><svg class="b" style="left:0;top:0" width="19" height="19"><path d="M4.8 4.8 L14.4 14.4 M14.4 4.8 L4.8 14.4" stroke="#fff" stroke-width="2.3" stroke-linecap="butt"/></svg></div>
<div class="b" style="left:484px;top:300px;width:477px;height:199px;background:#7890E0"></div>
<div class="b" style="left:484px;top:312px;width:4px;height:187px;background:linear-gradient(to right,#7080DC 12.50%,#7890E0 37.50%,#7890E0 62.50%,#7890E0 87.50%)"></div>
<div class="b" style="left:957px;top:312px;width:4px;height:187px;background:linear-gradient(to right,#7890E0 12.50%,#7088DE 37.50%,#6474D2 62.50%,#5058C0 87.50%)"></div>
<div class="b" style="left:484px;top:495px;width:477px;height:4px;background:linear-gradient(to bottom,#7890E0 12.50%,#7088DE 37.50%,#6474D2 62.50%,#5058C0 87.50%)"></div>
<div class="b" style="left:484px;top:292px;width:477px;height:30px;background:linear-gradient(to bottom,#7A90E0 1.67%,#98B0EC 5.00%,#9CB4EC 8.33%,#8CA6E8 11.67%,#829CE4 15.00%,#7C96E0 18.33%,#7C96E0 51.67%,#80A0E8 68.33%,#82A6EA 75.00%,#80A2E8 91.67%,#7C8EE0 95.00%,#7A88DE 98.33%);border-top-left-radius:7px;border-top-right-radius:7px;"></div>
<div class="b" style="left:488px;top:322px;width:469px;height:173px;background:#fff;box-sizing:border-box;border-top:1px solid #ACA494;border-left:1px solid #ACA494;border-right:1px solid #F4F4EE;border-bottom:1px solid #F4F4EE;"></div>
<div class="b" style="left:489px;top:323px;width:467px;height:171px;background:#fff;box-sizing:border-box;border-top:2px solid #6E6E5E;border-left:1px solid #6E6E5E;border-right:1px solid #fff;border-bottom:1px solid #fff;"></div>
<svg class="b" style="left:490px;top:324px" width="465" height="169" viewBox="0 0 465 169"><line x1="86" y1="18.5" x2="421" y2="18.5" class="g"/><line x1="86" y1="40.5" x2="421" y2="40.5" class="g"/><line x1="86" y1="62.5" x2="421" y2="62.5" class="g"/><line x1="86" y1="83.5" x2="421" y2="83.5" class="g"/><line x1="86" y1="105.5" x2="421" y2="105.5" class="g"/><line x1="147.5" y1="18" x2="147.5" y2="126" class="g"/><line x1="215.5" y1="18" x2="215.5" y2="126" class="g"/><line x1="284.5" y1="18" x2="284.5" y2="126" class="g"/><line x1="352.5" y1="18" x2="352.5" y2="126" class="g"/><line x1="420.5" y1="18" x2="420.5" y2="126" class="g"/><rect x="79" y="18" width="2" height="110" fill="#000"/><rect x="79" y="126" width="343" height="2" fill="#000"/><rect x="81" y="17" width="5" height="2" fill="#000"/><rect x="81" y="39" width="5" height="2" fill="#000"/><rect x="81" y="61" width="5" height="2" fill="#000"/><rect x="81" y="82" width="5" height="2" fill="#000"/><rect x="81" y="104" width="5" height="2" fill="#000"/><rect x="147" y="123" width="2" height="3" fill="#000"/><rect x="215" y="123" width="2" height="3" fill="#000"/><rect x="284" y="123" width="2" height="3" fill="#000"/><rect x="352" y="123" width="2" height="3" fill="#000"/><rect x="420" y="121" width="2" height="7" fill="#000"/><text x="73.5" y="16.0" text-anchor="end" class="ct">2.22e−4</text><text x="73.5" y="38.0" text-anchor="end" class="ct">1.77e−4</text><text x="73.5" y="60.0" text-anchor="end" class="ct">1.32e−4</text><text x="73.5" y="81.0" text-anchor="end" class="ct">8.73e−5</text><text x="73.5" y="103.0" text-anchor="end" class="ct">4.26e−5</text><text x="73.5" y="124.5" text-anchor="end" class="ct">−2.22e−6</text><text x="79.5" y="142.7" text-anchor="middle" class="ct">0.00</text><text x="147.7" y="142.7" text-anchor="middle" class="ct">6.60</text><text x="215.9" y="142.7" text-anchor="middle" class="ct">13.20</text><text x="284.1" y="142.7" text-anchor="middle" class="ct">19.80</text><text x="352.3" y="142.7" text-anchor="middle" class="ct">26.40</text><text x="420.5" y="142.7" text-anchor="middle" class="ct">33.00</text><text x="250" y="161" text-anchor="middle" class="ct">VDS (V)</text><text transform="translate(17 74.5) rotate(-90)" text-anchor="middle" class="ct">IDS (A)</text><text x="459.5" y="161" text-anchor="end" class="ct">Max. RMS Error = 0.16%</text><polyline fill="none" stroke="#FF0000" stroke-width="1.2" points="80.7,125.5 90.6,125.2 101.1,124.9 111.0,124.6 121.5,124.3 131.7,124.3 142.5,124.3 152.7,124.3 162.9,124.3 173.1,124.3 183.3,124.3 193.5,124.3 203.7,124.3 213.9,124.3 224.2,124.3 233.8,124.3 244.0,124.3 254.2,124.3 264.4,124.3 274.6,124.3 284.9,124.3 295.1,124.3 305.3,124.3 315.5,124.3 325.7,124.3 335.9,124.3 346.1,124.3 356.3,124.3 367.9,124.3 378.1,124.3 388.3,124.3"/><g fill="#FF0000"><rect x="78" y="123" width="5" height="5"/><rect x="88" y="123" width="5" height="5"/><rect x="99" y="122" width="5" height="5"/><rect x="109" y="122" width="5" height="5"/><rect x="119" y="122" width="5" height="5"/><rect x="129" y="122" width="5" height="5"/><rect x="140" y="122" width="5" height="5"/><rect x="150" y="122" width="5" height="5"/><rect x="160" y="122" width="5" height="5"/><rect x="171" y="122" width="5" height="5"/><rect x="181" y="122" width="5" height="5"/><rect x="191" y="122" width="5" height="5"/><rect x="201" y="122" width="5" height="5"/><rect x="211" y="122" width="5" height="5"/><rect x="222" y="122" width="5" height="5"/><rect x="231" y="122" width="5" height="5"/><rect x="242" y="122" width="5" height="5"/><rect x="252" y="122" width="5" height="5"/><rect x="262" y="122" width="5" height="5"/><rect x="272" y="122" width="5" height="5"/><rect x="282" y="122" width="5" height="5"/><rect x="293" y="122" width="5" height="5"/><rect x="303" y="122" width="5" height="5"/><rect x="313" y="122" width="5" height="5"/><rect x="323" y="122" width="5" height="5"/><rect x="333" y="122" width="5" height="5"/><rect x="344" y="122" width="5" height="5"/><rect x="354" y="122" width="5" height="5"/><rect x="365" y="122" width="5" height="5"/><rect x="376" y="122" width="5" height="5"/><rect x="386" y="122" width="5" height="5"/></g><polyline fill="none" stroke="#0000FF" stroke-width="1.2" points="80.7,125.5 90.6,124.9 101.1,124.3 111.0,123.4 121.5,122.9 131.7,122.3 142.5,122.0 152.7,121.7 162.9,121.4 173.1,121.4 183.3,121.1 193.5,121.1 203.7,121.1 213.9,121.1 224.2,121.1 233.8,120.8 244.0,120.8 254.2,120.8 264.4,120.8 274.6,120.8 284.9,120.8 295.1,120.8 305.3,120.8 315.5,120.8 325.7,120.8 335.9,120.8 346.1,120.8 356.3,120.8 367.9,120.8 378.1,120.8 388.3,120.8"/><g fill="#0000FF"><rect x="78" y="123" width="5" height="5"/><rect x="88" y="122" width="5" height="5"/><rect x="99" y="122" width="5" height="5"/><rect x="109" y="121" width="5" height="5"/><rect x="119" y="120" width="5" height="5"/><rect x="129" y="120" width="5" height="5"/><rect x="140" y="119" width="5" height="5"/><rect x="150" y="119" width="5" height="5"/><rect x="160" y="119" width="5" height="5"/><rect x="171" y="119" width="5" height="5"/><rect x="181" y="119" width="5" height="5"/><rect x="191" y="119" width="5" height="5"/><rect x="201" y="119" width="5" height="5"/><rect x="211" y="119" width="5" height="5"/><rect x="222" y="119" width="5" height="5"/><rect x="231" y="118" width="5" height="5"/><rect x="242" y="118" width="5" height="5"/><rect x="252" y="118" width="5" height="5"/><rect x="262" y="118" width="5" height="5"/><rect x="272" y="118" width="5" height="5"/><rect x="282" y="118" width="5" height="5"/><rect x="293" y="118" width="5" height="5"/><rect x="303" y="118" width="5" height="5"/><rect x="313" y="118" width="5" height="5"/><rect x="323" y="118" width="5" height="5"/><rect x="333" y="118" width="5" height="5"/><rect x="344" y="118" width="5" height="5"/><rect x="354" y="118" width="5" height="5"/><rect x="365" y="118" width="5" height="5"/><rect x="376" y="118" width="5" height="5"/><rect x="386" y="118" width="5" height="5"/></g><polyline fill="none" stroke="#006400" stroke-width="1.2" points="80.7,125.5 90.6,124.9 101.1,123.4 111.0,121.4 121.5,119.9 131.7,118.5 142.5,118.2 152.7,117.6 162.9,117.0 173.1,116.1 183.3,116.1 193.5,115.3 203.7,114.7 213.9,114.7 224.2,114.1 233.8,113.8 244.0,113.2 254.2,113.2 264.4,112.6 274.6,112.6 284.9,112.4 295.1,112.1 305.3,111.8 315.5,111.8 325.7,111.5 335.9,111.2 346.1,111.2 356.3,110.9 367.9,110.6 378.1,110.3 388.3,110.3"/><g fill="#006400"><rect x="78" y="123" width="5" height="5"/><rect x="88" y="122" width="5" height="5"/><rect x="99" y="121" width="5" height="5"/><rect x="109" y="119" width="5" height="5"/><rect x="119" y="117" width="5" height="5"/><rect x="129" y="116" width="5" height="5"/><rect x="140" y="116" width="5" height="5"/><rect x="150" y="115" width="5" height="5"/><rect x="160" y="115" width="5" height="5"/><rect x="171" y="114" width="5" height="5"/><rect x="181" y="114" width="5" height="5"/><rect x="191" y="113" width="5" height="5"/><rect x="201" y="112" width="5" height="5"/><rect x="211" y="112" width="5" height="5"/><rect x="222" y="112" width="5" height="5"/><rect x="231" y="111" width="5" height="5"/><rect x="242" y="111" width="5" height="5"/><rect x="252" y="111" width="5" height="5"/><rect x="262" y="110" width="5" height="5"/><rect x="272" y="110" width="5" height="5"/><rect x="282" y="110" width="5" height="5"/><rect x="293" y="110" width="5" height="5"/><rect x="303" y="109" width="5" height="5"/><rect x="313" y="109" width="5" height="5"/><rect x="323" y="109" width="5" height="5"/><rect x="333" y="109" width="5" height="5"/><rect x="344" y="109" width="5" height="5"/><rect x="354" y="108" width="5" height="5"/><rect x="365" y="108" width="5" height="5"/><rect x="376" y="108" width="5" height="5"/><rect x="386" y="108" width="5" height="5"/></g><polyline fill="none" stroke="#FF00FF" stroke-width="1.2" points="80.7,125.5 90.6,124.9 101.1,122.6 111.0,119.9 121.5,117.0 131.7,115.3 142.5,113.2 152.7,111.8 162.9,109.7 173.1,108.9 183.3,107.4 193.5,105.9 203.7,105.4 213.9,103.6 224.2,103.0 233.8,102.2 244.0,101.3 254.2,101.3 264.4,100.1 274.6,99.5 284.9,99.2 295.1,98.1 305.3,98.1 315.5,97.2 325.7,97.2 335.9,96.3 346.1,96.3 356.3,95.2 367.9,95.2 378.1,94.9 388.3,94.3"/><g fill="#FF00FF"><rect x="78" y="123" width="5" height="5"/><rect x="88" y="122" width="5" height="5"/><rect x="99" y="120" width="5" height="5"/><rect x="109" y="117" width="5" height="5"/><rect x="119" y="115" width="5" height="5"/><rect x="129" y="113" width="5" height="5"/><rect x="140" y="111" width="5" height="5"/><rect x="150" y="109" width="5" height="5"/><rect x="160" y="107" width="5" height="5"/><rect x="171" y="106" width="5" height="5"/><rect x="181" y="105" width="5" height="5"/><rect x="191" y="103" width="5" height="5"/><rect x="201" y="103" width="5" height="5"/><rect x="211" y="101" width="5" height="5"/><rect x="222" y="101" width="5" height="5"/><rect x="231" y="100" width="5" height="5"/><rect x="242" y="99" width="5" height="5"/><rect x="252" y="99" width="5" height="5"/><rect x="262" y="98" width="5" height="5"/><rect x="272" y="97" width="5" height="5"/><rect x="282" y="97" width="5" height="5"/><rect x="293" y="96" width="5" height="5"/><rect x="303" y="96" width="5" height="5"/><rect x="313" y="95" width="5" height="5"/><rect x="323" y="95" width="5" height="5"/><rect x="333" y="94" width="5" height="5"/><rect x="344" y="94" width="5" height="5"/><rect x="354" y="93" width="5" height="5"/><rect x="365" y="93" width="5" height="5"/><rect x="376" y="92" width="5" height="5"/><rect x="386" y="92" width="5" height="5"/></g><polyline fill="none" stroke="#000000" stroke-width="1.2" points="80.7,125.2 90.6,123.4 101.1,120.5 111.0,117.6 121.5,114.7 131.7,111.2 142.5,108.0 152.7,104.5 162.9,102.4 173.1,99.5 183.3,97.8 193.5,94.3 203.7,93.4 213.9,91.4 224.2,89.3 233.8,87.0 244.0,85.5 254.2,84.1 264.4,83.2 274.6,81.7 284.9,80.6 295.1,79.1 305.3,78.2 315.5,76.8 325.7,76.2 335.9,75.3 346.1,74.5 356.3,73.3 367.9,72.4 378.1,71.8 388.3,71.2"/><g fill="#000000"><rect x="78" y="123" width="5" height="5"/><rect x="88" y="121" width="5" height="5"/><rect x="99" y="118" width="5" height="5"/><rect x="109" y="115" width="5" height="5"/><rect x="119" y="112" width="5" height="5"/><rect x="129" y="109" width="5" height="5"/><rect x="140" y="105" width="5" height="5"/><rect x="150" y="102" width="5" height="5"/><rect x="160" y="100" width="5" height="5"/><rect x="171" y="97" width="5" height="5"/><rect x="181" y="95" width="5" height="5"/><rect x="191" y="92" width="5" height="5"/><rect x="201" y="91" width="5" height="5"/><rect x="211" y="89" width="5" height="5"/><rect x="222" y="87" width="5" height="5"/><rect x="231" y="84" width="5" height="5"/><rect x="242" y="83" width="5" height="5"/><rect x="252" y="82" width="5" height="5"/><rect x="262" y="81" width="5" height="5"/><rect x="272" y="79" width="5" height="5"/><rect x="282" y="78" width="5" height="5"/><rect x="293" y="77" width="5" height="5"/><rect x="303" y="76" width="5" height="5"/><rect x="313" y="74" width="5" height="5"/><rect x="323" y="74" width="5" height="5"/><rect x="333" y="73" width="5" height="5"/><rect x="344" y="72" width="5" height="5"/><rect x="354" y="71" width="5" height="5"/><rect x="365" y="70" width="5" height="5"/><rect x="376" y="69" width="5" height="5"/><rect x="386" y="69" width="5" height="5"/></g><polyline fill="none" stroke="#883A3A" stroke-width="1.2" points="80.7,125.2 90.6,122.6 101.1,119.1 111.0,114.7 121.5,110.3 131.7,106.5 142.5,102.2 152.7,97.8 162.9,94.3 173.1,90.5 183.3,86.4 193.5,83.5 203.7,79.1 213.9,76.8 224.2,73.3 233.8,70.4 244.0,67.5 254.2,64.5 264.4,62.2 274.6,59.3 284.9,57.3 295.1,54.9 305.3,52.9 315.5,51.1 325.7,49.7 335.9,48.2 346.1,46.2 356.3,44.1 367.9,43.3 378.1,41.2 388.3,39.5"/><g fill="#883A3A"><rect x="78" y="123" width="5" height="5"/><rect x="88" y="120" width="5" height="5"/><rect x="99" y="117" width="5" height="5"/><rect x="109" y="112" width="5" height="5"/><rect x="119" y="108" width="5" height="5"/><rect x="129" y="104" width="5" height="5"/><rect x="140" y="100" width="5" height="5"/><rect x="150" y="95" width="5" height="5"/><rect x="160" y="92" width="5" height="5"/><rect x="171" y="88" width="5" height="5"/><rect x="181" y="84" width="5" height="5"/><rect x="191" y="81" width="5" height="5"/><rect x="201" y="77" width="5" height="5"/><rect x="211" y="74" width="5" height="5"/><rect x="222" y="71" width="5" height="5"/><rect x="231" y="68" width="5" height="5"/><rect x="242" y="65" width="5" height="5"/><rect x="252" y="62" width="5" height="5"/><rect x="262" y="60" width="5" height="5"/><rect x="272" y="57" width="5" height="5"/><rect x="282" y="55" width="5" height="5"/><rect x="293" y="52" width="5" height="5"/><rect x="303" y="50" width="5" height="5"/><rect x="313" y="49" width="5" height="5"/><rect x="323" y="47" width="5" height="5"/><rect x="333" y="46" width="5" height="5"/><rect x="344" y="44" width="5" height="5"/><rect x="354" y="42" width="5" height="5"/><rect x="365" y="41" width="5" height="5"/><rect x="376" y="39" width="5" height="5"/><rect x="386" y="37" width="5" height="5"/></g><text x="425" y="29" class="ct">VGS =</text><text x="428.5" y="47.0" class="ct" fill="#FF0000">5.10</text><text x="428.5" y="65.2" class="ct" fill="#0000FF">10.1</text><text x="428.5" y="83.4" class="ct" fill="#006400">15.1</text><text x="428.5" y="101.6" class="ct" fill="#FF00FF">20.1</text><text x="428.5" y="119.8" class="ct" fill="#000000">25.1</text><rect x="428" y="128.0" width="26" height="12" fill="#fff"/><text x="428.5" y="138.0" class="ct" fill="#883A3A">30.1</text></svg>
<svg class="b" style="left:490px;top:300px" width="16" height="16" viewBox="0 0 16 16"><rect width="16" height="16" fill="#0A14F0"/><rect x="1" y="3" width="14" height="12" fill="#fff"/><rect x="12.5" y="0.8" width="2.2" height="1.4" fill="#ff3030" stroke="#fff" stroke-width="0.5"/><path d="M2.5 4 V13.5 H14" stroke="#000" stroke-width="1.4" fill="none"/><path d="M3.5 12.5 C4.5 8 6.5 4.8 9 4.6 H14" stroke="#00c000" stroke-width="1.2" fill="none"/><path d="M3.5 12.5 C5 10 6 8.6 7.5 8.5 H14" stroke="#1020ff" stroke-width="1.2" fill="none"/><path d="M3 12.5 C5 11.6 6 11.5 7 11.5 H14" stroke="#ff1010" stroke-width="1.3" fill="none"/></svg>
<div class="b" style="left:888px;top:298px;width:19px;height:19px;border:1px solid #C8D4F4;border-radius:3px;background:radial-gradient(circle at 30% 25%,#8CA8F0 0%,#5E80E2 45%,#4F72DA 100%);overflow:hidden"><div class="b" style="left:4px;top:12px;width:7px;height:3px;background:#fff"></div></div>
<div class="b" style="left:911px;top:298px;width:19px;height:19px;border:1px solid #C8D4F4;border-radius:3px;background:radial-gradient(circle at 30% 25%,#8CA8F0 0%,#5E80E2 45%,#4F72DA 100%);overflow:hidden"><div class="b" style="left:4px;top:4px;width:9px;height:7px;border:1px solid #fff;border-top-width:3px"></div></div>
<div class="b" style="left:934px;top:298px;width:19px;height:19px;border:1px solid #C8D4F4;border-radius:3px;background:radial-gradient(circle at 30% 25%,#D0A0B4 0%,#C07890 45%,#B86C86 100%);overflow:hidden"><svg class="b" style="left:0;top:0" width="19" height="19"><path d="M4.8 4.8 L14.4 14.4 M14.4 4.8 L4.8 14.4" stroke="#fff" stroke-width="2.3" stroke-linecap="butt"/></svg></div>
<div class="b" style="left:6px;top:93px;width:478px;height:199px;background:#0038E0"></div>
<div class="b" style="left:6px;top:105px;width:4px;height:187px;background:linear-gradient(to right,#0030D8 12.50%,#0858F0 37.50%,#0054E8 62.50%,#0050E0 87.50%)"></div>
<div class="b" style="left:480px;top:105px;width:4px;height:187px;background:linear-gradient(to right,#0844F0 12.50%,#0038E0 37.50%,#0028C8 62.50%,#00189C 87.50%)"></div>
<div class="b" style="left:6px;top:288px;width:478px;height:4px;background:linear-gradient(to bottom,#0844F0 12.50%,#0038E0 37.50%,#0028C8 62.50%,#00189C 87.50%)"></div>
<div class="b" style="left:6px;top:85px;width:478px;height:30px;background:linear-gradient(to bottom,#0046E0 1.67%,#3C96FF 5.00%,#3690FF 8.33%,#0A6EFC 11.67%,#0464F0 15.00%,#005CE6 18.33%,#0058E0 21.67%,#0058E0 51.67%,#005CE8 58.33%,#0264F6 65.00%,#0468FC 68.33%,#0468FE 88.33%,#0460F0 91.67%,#0044D6 95.00%,#003CCC 98.33%);border-top-left-radius:7px;border-top-right-radius:7px;"></div>
<div class="b" style="left:10px;top:115px;width:470px;height:173px;background:#fff;box-sizing:border-box;border-top:1px solid #ACA494;border-left:1px solid #ACA494;border-right:1px solid #F4F4EE;border-bottom:1px solid #F4F4EE;"></div>
<div class="b" style="left:11px;top:116px;width:468px;height:171px;background:#fff;box-sizing:border-box;border-top:2px solid #6E6E5E;border-left:1px solid #6E6E5E;border-right:1px solid #fff;border-bottom:1px solid #fff;"></div>
<svg class="b" style="left:12px;top:117px" width="466" height="169" viewBox="0 0 466 169"><line x1="86" y1="19.5" x2="421" y2="19.5" class="g"/><line x1="86" y1="40.5" x2="421" y2="40.5" class="g"/><line x1="86" y1="62.5" x2="421" y2="62.5" class="g"/><line x1="86" y1="83.5" x2="421" y2="83.5" class="g"/><line x1="86" y1="105.5" x2="421" y2="105.5" class="g"/><line x1="147.5" y1="19" x2="147.5" y2="127" class="g"/><line x1="215.5" y1="19" x2="215.5" y2="127" class="g"/><line x1="284.5" y1="19" x2="284.5" y2="127" class="g"/><line x1="352.5" y1="19" x2="352.5" y2="127" class="g"/><line x1="420.5" y1="19" x2="420.5" y2="127" class="g"/><rect x="79" y="19" width="2" height="110" fill="#000"/><rect x="79" y="127" width="343" height="2" fill="#000"/><rect x="81" y="18" width="5" height="2" fill="#000"/><rect x="81" y="39" width="5" height="2" fill="#000"/><rect x="81" y="61" width="5" height="2" fill="#000"/><rect x="81" y="82" width="5" height="2" fill="#000"/><rect x="81" y="104" width="5" height="2" fill="#000"/><rect x="147" y="124" width="2" height="3" fill="#000"/><rect x="215" y="124" width="2" height="3" fill="#000"/><rect x="284" y="124" width="2" height="3" fill="#000"/><rect x="352" y="124" width="2" height="3" fill="#000"/><rect x="420" y="122" width="2" height="7" fill="#000"/><text x="73.5" y="17.0" text-anchor="end" class="ct">1.78e−5</text><text x="73.5" y="38.0" text-anchor="end" class="ct">1.42e−5</text><text x="73.5" y="60.0" text-anchor="end" class="ct">1.06e−5</text><text x="73.5" y="81.0" text-anchor="end" class="ct">6.99e−6</text><text x="73.5" y="103.0" text-anchor="end" class="ct">3.41e−6</text><text x="73.5" y="125.5" text-anchor="end" class="ct">−1.78e−7</text><text x="79.5" y="143.7" text-anchor="middle" class="ct">−20.00</text><text x="147.7" y="143.7" text-anchor="middle" class="ct">−9.00</text><text x="215.9" y="143.7" text-anchor="middle" class="ct">2.00</text><text x="284.1" y="143.7" text-anchor="middle" class="ct">13.00</text><text x="352.3" y="143.7" text-anchor="middle" class="ct">24.00</text><text x="420.5" y="143.7" text-anchor="middle" class="ct">35.00</text><text x="250" y="162" text-anchor="middle" class="ct">VGS (V)</text><text transform="translate(17 75.5) rotate(-90)" text-anchor="middle" class="ct">Gm (S)</text><text x="459.5" y="162" text-anchor="end" class="ct">Max. RMS Error = 0.50%</text><polyline fill="none" stroke="#FF0000" stroke-width="1.2" points="80.5,126.0 86.7,126.0 92.8,126.0 99.0,126.0 105.2,126.0 111.4,126.0 117.6,126.0 123.7,126.0 129.9,126.0 136.1,126.0 142.2,126.0 148.4,126.0 154.6,126.0 160.8,126.0 166.9,126.0 173.1,126.0 179.3,126.0 185.5,126.0 191.6,126.0 197.8,126.0 204.0,126.0 210.2,125.9 216.3,125.4 222.5,124.8 228.7,124.3 234.9,123.5 241.0,122.6 247.2,121.8 253.4,120.8 259.6,119.9 265.8,119.2 271.9,118.5 278.1,118.0 284.3,117.4 290.4,117.1 296.6,116.7 302.8,116.4 309.0,115.9 315.1,115.2 321.3,114.5 327.5,113.8 333.7,113.1 339.8,112.4 346.0,112.4 352.2,112.4 358.4,112.1 364.6,111.8 370.7,111.5 376.9,111.2 383.1,110.8 389.2,110.5"/><g fill="#FF0000"><rect x="78" y="124" width="5" height="5"/><rect x="84" y="124" width="5" height="5"/><rect x="90" y="124" width="5" height="5"/><rect x="97" y="124" width="5" height="5"/><rect x="103" y="124" width="5" height="5"/><rect x="109" y="124" width="5" height="5"/><rect x="115" y="124" width="5" height="5"/><rect x="121" y="124" width="5" height="5"/><rect x="127" y="124" width="5" height="5"/><rect x="134" y="124" width="5" height="5"/><rect x="140" y="124" width="5" height="5"/><rect x="146" y="124" width="5" height="5"/><rect x="152" y="124" width="5" height="5"/><rect x="158" y="124" width="5" height="5"/><rect x="164" y="124" width="5" height="5"/><rect x="171" y="124" width="5" height="5"/><rect x="177" y="124" width="5" height="5"/><rect x="183" y="124" width="5" height="5"/><rect x="189" y="124" width="5" height="5"/><rect x="195" y="124" width="5" height="5"/><rect x="202" y="124" width="5" height="5"/><rect x="208" y="123" width="5" height="5"/><rect x="214" y="123" width="5" height="5"/><rect x="220" y="122" width="5" height="5"/><rect x="226" y="122" width="5" height="5"/><rect x="232" y="121" width="5" height="5"/><rect x="239" y="120" width="5" height="5"/><rect x="245" y="119" width="5" height="5"/><rect x="251" y="118" width="5" height="5"/><rect x="257" y="117" width="5" height="5"/><rect x="263" y="117" width="5" height="5"/><rect x="269" y="116" width="5" height="5"/><rect x="276" y="115" width="5" height="5"/><rect x="282" y="115" width="5" height="5"/><rect x="288" y="115" width="5" height="5"/><rect x="294" y="114" width="5" height="5"/><rect x="300" y="114" width="5" height="5"/><rect x="306" y="113" width="5" height="5"/><rect x="313" y="113" width="5" height="5"/><rect x="319" y="112" width="5" height="5"/><rect x="325" y="111" width="5" height="5"/><rect x="331" y="111" width="5" height="5"/><rect x="337" y="110" width="5" height="5"/><rect x="344" y="110" width="5" height="5"/><rect x="350" y="110" width="5" height="5"/><rect x="356" y="110" width="5" height="5"/><rect x="362" y="109" width="5" height="5"/><rect x="368" y="109" width="5" height="5"/><rect x="374" y="109" width="5" height="5"/><rect x="381" y="108" width="5" height="5"/><rect x="387" y="108" width="5" height="5"/></g><polyline fill="none" stroke="#0000FF" stroke-width="1.2" points="80.5,126.0 86.7,126.0 92.8,126.0 99.0,126.0 105.2,126.0 111.4,126.0 117.6,126.0 123.7,126.0 129.9,126.0 136.1,126.0 142.2,126.0 148.4,126.0 154.6,126.0 160.8,126.0 166.9,126.0 173.1,126.0 179.3,126.0 185.5,126.0 191.6,126.0 197.8,126.0 204.0,126.0 210.2,125.9 216.3,125.1 222.5,124.3 228.7,123.5 234.9,122.1 241.0,120.7 247.2,119.3 253.4,118.0 259.6,116.7 265.8,115.4 271.9,113.4 278.1,112.2 284.3,110.5 290.4,109.0 296.6,108.8 302.8,106.9 309.0,106.0 315.1,104.1 321.3,103.0 327.5,103.0 333.7,101.1 339.8,100.3 346.0,99.0 352.2,99.0 358.4,99.0 364.6,98.3 370.7,97.1 376.9,97.4 383.1,95.2 389.2,95.2"/><g fill="#0000FF"><rect x="78" y="124" width="5" height="5"/><rect x="84" y="124" width="5" height="5"/><rect x="90" y="124" width="5" height="5"/><rect x="97" y="124" width="5" height="5"/><rect x="103" y="124" width="5" height="5"/><rect x="109" y="124" width="5" height="5"/><rect x="115" y="124" width="5" height="5"/><rect x="121" y="124" width="5" height="5"/><rect x="127" y="124" width="5" height="5"/><rect x="134" y="124" width="5" height="5"/><rect x="140" y="124" width="5" height="5"/><rect x="146" y="124" width="5" height="5"/><rect x="152" y="124" width="5" height="5"/><rect x="158" y="124" width="5" height="5"/><rect x="164" y="124" width="5" height="5"/><rect x="171" y="124" width="5" height="5"/><rect x="177" y="124" width="5" height="5"/><rect x="183" y="124" width="5" height="5"/><rect x="189" y="124" width="5" height="5"/><rect x="195" y="124" width="5" height="5"/><rect x="202" y="124" width="5" height="5"/><rect x="208" y="123" width="5" height="5"/><rect x="214" y="123" width="5" height="5"/><rect x="220" y="122" width="5" height="5"/><rect x="226" y="121" width="5" height="5"/><rect x="232" y="120" width="5" height="5"/><rect x="239" y="118" width="5" height="5"/><rect x="245" y="117" width="5" height="5"/><rect x="251" y="116" width="5" height="5"/><rect x="257" y="114" width="5" height="5"/><rect x="263" y="113" width="5" height="5"/><rect x="269" y="111" width="5" height="5"/><rect x="276" y="110" width="5" height="5"/><rect x="282" y="108" width="5" height="5"/><rect x="288" y="106" width="5" height="5"/><rect x="294" y="106" width="5" height="5"/><rect x="300" y="104" width="5" height="5"/><rect x="306" y="103" width="5" height="5"/><rect x="313" y="102" width="5" height="5"/><rect x="319" y="100" width="5" height="5"/><rect x="325" y="100" width="5" height="5"/><rect x="331" y="99" width="5" height="5"/><rect x="337" y="98" width="5" height="5"/><rect x="344" y="97" width="5" height="5"/><rect x="350" y="96" width="5" height="5"/><rect x="356" y="96" width="5" height="5"/><rect x="362" y="96" width="5" height="5"/><rect x="368" y="95" width="5" height="5"/><rect x="374" y="95" width="5" height="5"/><rect x="381" y="93" width="5" height="5"/><rect x="387" y="93" width="5" height="5"/></g><polyline fill="none" stroke="#006400" stroke-width="1.2" points="80.5,126.0 86.7,126.0 92.8,126.0 99.0,126.0 105.2,126.0 111.4,126.0 117.6,126.0 123.7,126.0 129.9,126.0 136.1,126.0 142.2,126.0 148.4,126.0 154.6,126.0 160.8,126.0 166.9,126.0 173.1,126.0 179.3,126.0 185.5,126.0 191.6,126.0 197.8,126.0 204.0,126.0 210.2,125.8 216.3,124.9 222.5,124.0 228.7,123.0 234.9,121.4 241.0,119.7 247.2,117.9 253.4,116.1 259.6,114.0 265.8,111.9 271.9,109.8 278.1,107.8 284.3,106.0 290.4,104.8 296.6,102.8 302.8,100.2 309.0,98.8 315.1,95.1 321.3,94.1 327.5,92.1 333.7,90.2 339.8,89.0 346.0,87.1 352.2,86.0 358.4,84.2 364.6,83.3 370.7,81.1 376.9,80.3 383.1,79.2 389.2,78.0"/><g fill="#006400"><rect x="78" y="124" width="5" height="5"/><rect x="84" y="124" width="5" height="5"/><rect x="90" y="124" width="5" height="5"/><rect x="97" y="124" width="5" height="5"/><rect x="103" y="124" width="5" height="5"/><rect x="109" y="124" width="5" height="5"/><rect x="115" y="124" width="5" height="5"/><rect x="121" y="124" width="5" height="5"/><rect x="127" y="124" width="5" height="5"/><rect x="134" y="124" width="5" height="5"/><rect x="140" y="124" width="5" height="5"/><rect x="146" y="124" width="5" height="5"/><rect x="152" y="124" width="5" height="5"/><rect x="158" y="124" width="5" height="5"/><rect x="164" y="124" width="5" height="5"/><rect x="171" y="124" width="5" height="5"/><rect x="177" y="124" width="5" height="5"/><rect x="183" y="124" width="5" height="5"/><rect x="189" y="124" width="5" height="5"/><rect x="195" y="124" width="5" height="5"/><rect x="202" y="124" width="5" height="5"/><rect x="208" y="123" width="5" height="5"/><rect x="214" y="122" width="5" height="5"/><rect x="220" y="121" width="5" height="5"/><rect x="226" y="121" width="5" height="5"/><rect x="232" y="119" width="5" height="5"/><rect x="239" y="117" width="5" height="5"/><rect x="245" y="115" width="5" height="5"/><rect x="251" y="114" width="5" height="5"/><rect x="257" y="111" width="5" height="5"/><rect x="263" y="109" width="5" height="5"/><rect x="269" y="107" width="5" height="5"/><rect x="276" y="105" width="5" height="5"/><rect x="282" y="103" width="5" height="5"/><rect x="288" y="102" width="5" height="5"/><rect x="294" y="100" width="5" height="5"/><rect x="300" y="98" width="5" height="5"/><rect x="306" y="96" width="5" height="5"/><rect x="313" y="93" width="5" height="5"/><rect x="319" y="92" width="5" height="5"/><rect x="325" y="90" width="5" height="5"/><rect x="331" y="88" width="5" height="5"/><rect x="337" y="87" width="5" height="5"/><rect x="344" y="85" width="5" height="5"/><rect x="350" y="84" width="5" height="5"/><rect x="356" y="82" width="5" height="5"/><rect x="362" y="81" width="5" height="5"/><rect x="368" y="79" width="5" height="5"/><rect x="374" y="78" width="5" height="5"/><rect x="381" y="77" width="5" height="5"/><rect x="387" y="76" width="5" height="5"/></g><polyline fill="none" stroke="#FF00FF" stroke-width="1.2" points="80.5,126.0 86.7,126.0 92.8,126.0 99.0,126.0 105.2,126.0 111.4,126.0 117.6,126.0 123.7,126.0 129.9,126.0 136.1,126.0 142.2,126.0 148.4,126.0 154.6,126.0 160.8,126.0 166.9,126.0 173.1,126.0 179.3,126.0 185.5,126.0 191.6,126.0 197.8,126.0 204.0,126.0 210.2,125.8 216.3,124.7 222.5,123.6 228.7,122.6 234.9,120.7 241.0,118.7 247.2,116.7 253.4,114.6 259.6,112.2 265.8,109.9 271.9,107.6 278.1,105.2 284.3,103.0 290.4,101.0 296.6,98.4 302.8,95.9 309.0,93.4 315.1,90.4 321.3,87.3 327.5,84.5 333.7,82.4 339.8,80.3 346.0,78.0 352.2,75.1 358.4,72.1 364.6,71.0 370.7,68.2 376.9,66.1 383.1,64.2 389.2,63.2"/><g fill="#FF00FF"><rect x="78" y="124" width="5" height="5"/><rect x="84" y="124" width="5" height="5"/><rect x="90" y="124" width="5" height="5"/><rect x="97" y="124" width="5" height="5"/><rect x="103" y="124" width="5" height="5"/><rect x="109" y="124" width="5" height="5"/><rect x="115" y="124" width="5" height="5"/><rect x="121" y="124" width="5" height="5"/><rect x="127" y="124" width="5" height="5"/><rect x="134" y="124" width="5" height="5"/><rect x="140" y="124" width="5" height="5"/><rect x="146" y="124" width="5" height="5"/><rect x="152" y="124" width="5" height="5"/><rect x="158" y="124" width="5" height="5"/><rect x="164" y="124" width="5" height="5"/><rect x="171" y="124" width="5" height="5"/><rect x="177" y="124" width="5" height="5"/><rect x="183" y="124" width="5" height="5"/><rect x="189" y="124" width="5" height="5"/><rect x="195" y="124" width="5" height="5"/><rect x="202" y="124" width="5" height="5"/><rect x="208" y="123" width="5" height="5"/><rect x="214" y="122" width="5" height="5"/><rect x="220" y="121" width="5" height="5"/><rect x="226" y="120" width="5" height="5"/><rect x="232" y="118" width="5" height="5"/><rect x="239" y="116" width="5" height="5"/><rect x="245" y="114" width="5" height="5"/><rect x="251" y="112" width="5" height="5"/><rect x="257" y="110" width="5" height="5"/><rect x="263" y="107" width="5" height="5"/><rect x="269" y="105" width="5" height="5"/><rect x="276" y="103" width="5" height="5"/><rect x="282" y="100" width="5" height="5"/><rect x="288" y="99" width="5" height="5"/><rect x="294" y="96" width="5" height="5"/><rect x="300" y="93" width="5" height="5"/><rect x="306" y="91" width="5" height="5"/><rect x="313" y="88" width="5" height="5"/><rect x="319" y="85" width="5" height="5"/><rect x="325" y="82" width="5" height="5"/><rect x="331" y="80" width="5" height="5"/><rect x="337" y="78" width="5" height="5"/><rect x="344" y="76" width="5" height="5"/><rect x="350" y="73" width="5" height="5"/><rect x="356" y="70" width="5" height="5"/><rect x="362" y="68" width="5" height="5"/><rect x="368" y="66" width="5" height="5"/><rect x="374" y="64" width="5" height="5"/><rect x="381" y="62" width="5" height="5"/><rect x="387" y="61" width="5" height="5"/></g><polyline fill="none" stroke="#000000" stroke-width="1.2" points="80.5,126.0 86.7,126.0 92.8,126.0 99.0,126.0 105.2,126.0 111.4,126.0 117.6,126.0 123.7,126.0 129.9,126.0 136.1,126.0 142.2,126.0 148.4,126.0 154.6,126.0 160.8,126.0 166.9,126.0 173.1,126.0 179.3,126.0 185.5,126.0 191.6,126.0 197.8,126.0 204.0,126.0 210.2,125.8 216.3,124.5 222.5,123.3 228.7,122.1 234.9,119.9 241.0,117.7 247.2,115.6 253.4,113.4 259.6,110.9 265.8,108.4 271.9,106.1 278.1,103.6 284.3,100.5 290.4,97.4 296.6,94.7 302.8,92.8 309.0,89.7 315.1,86.7 321.3,83.6 327.5,80.7 333.7,76.7 339.8,74.0 346.0,70.3 352.2,68.1 358.4,64.2 364.6,61.0 370.7,58.3 376.9,55.3 383.1,52.4 389.2,50.2"/><g fill="#000000"><rect x="78" y="124" width="5" height="5"/><rect x="84" y="124" width="5" height="5"/><rect x="90" y="124" width="5" height="5"/><rect x="97" y="124" width="5" height="5"/><rect x="103" y="124" width="5" height="5"/><rect x="109" y="124" width="5" height="5"/><rect x="115" y="124" width="5" height="5"/><rect x="121" y="124" width="5" height="5"/><rect x="127" y="124" width="5" height="5"/><rect x="134" y="124" width="5" height="5"/><rect x="140" y="124" width="5" height="5"/><rect x="146" y="124" width="5" height="5"/><rect x="152" y="124" width="5" height="5"/><rect x="158" y="124" width="5" height="5"/><rect x="164" y="124" width="5" height="5"/><rect x="171" y="124" width="5" height="5"/><rect x="177" y="124" width="5" height="5"/><rect x="183" y="124" width="5" height="5"/><rect x="189" y="124" width="5" height="5"/><rect x="195" y="124" width="5" height="5"/><rect x="202" y="124" width="5" height="5"/><rect x="208" y="123" width="5" height="5"/><rect x="214" y="122" width="5" height="5"/><rect x="220" y="121" width="5" height="5"/><rect x="226" y="120" width="5" height="5"/><rect x="232" y="117" width="5" height="5"/><rect x="239" y="115" width="5" height="5"/><rect x="245" y="113" width="5" height="5"/><rect x="251" y="111" width="5" height="5"/><rect x="257" y="108" width="5" height="5"/><rect x="263" y="106" width="5" height="5"/><rect x="269" y="104" width="5" height="5"/><rect x="276" y="101" width="5" height="5"/><rect x="282" y="98" width="5" height="5"/><rect x="288" y="95" width="5" height="5"/><rect x="294" y="92" width="5" height="5"/><rect x="300" y="90" width="5" height="5"/><rect x="306" y="87" width="5" height="5"/><rect x="313" y="84" width="5" height="5"/><rect x="319" y="81" width="5" height="5"/><rect x="325" y="78" width="5" height="5"/><rect x="331" y="74" width="5" height="5"/><rect x="337" y="72" width="5" height="5"/><rect x="344" y="68" width="5" height="5"/><rect x="350" y="66" width="5" height="5"/><rect x="356" y="62" width="5" height="5"/><rect x="362" y="58" width="5" height="5"/><rect x="368" y="56" width="5" height="5"/><rect x="374" y="53" width="5" height="5"/><rect x="381" y="50" width="5" height="5"/><rect x="387" y="48" width="5" height="5"/></g><polyline fill="none" stroke="#883A3A" stroke-width="1.2" points="80.5,126.0 86.7,126.0 92.8,126.0 99.0,126.0 105.2,126.0 111.4,126.0 117.6,126.0 123.7,126.0 129.9,126.0 136.1,126.0 142.2,126.1 148.4,126.1 154.6,126.1 160.8,126.1 166.9,126.1 173.1,126.1 179.3,126.1 185.5,126.1 191.6,126.1 197.8,126.1 204.0,126.0 210.2,123.9 216.3,123.0 222.5,122.7 228.7,121.2 234.9,118.8 241.0,117.0 247.2,114.6 253.4,112.5 259.6,110.1 265.8,107.3 271.9,104.7 278.1,102.6 284.3,99.2 290.4,96.6 296.6,92.7 302.8,89.7 309.0,86.8 315.1,82.7 321.3,79.9 327.5,76.0 333.7,72.1 339.8,69.3 346.0,64.1 352.2,61.0 358.4,56.7 364.6,52.8 370.7,49.1 376.9,46.1 383.1,42.4 389.2,40.2"/><g fill="#883A3A"><rect x="78" y="124" width="5" height="5"/><rect x="84" y="124" width="5" height="5"/><rect x="90" y="124" width="5" height="5"/><rect x="97" y="124" width="5" height="5"/><rect x="103" y="124" width="5" height="5"/><rect x="109" y="124" width="5" height="5"/><rect x="115" y="124" width="5" height="5"/><rect x="121" y="124" width="5" height="5"/><rect x="127" y="124" width="5" height="5"/><rect x="134" y="124" width="5" height="5"/><rect x="140" y="124" width="5" height="5"/><rect x="146" y="124" width="5" height="5"/><rect x="152" y="124" width="5" height="5"/><rect x="158" y="124" width="5" height="5"/><rect x="164" y="124" width="5" height="5"/><rect x="171" y="124" width="5" height="5"/><rect x="177" y="124" width="5" height="5"/><rect x="183" y="124" width="5" height="5"/><rect x="189" y="124" width="5" height="5"/><rect x="195" y="124" width="5" height="5"/><rect x="202" y="123" width="5" height="5"/><rect x="208" y="121" width="5" height="5"/><rect x="214" y="120" width="5" height="5"/><rect x="220" y="120" width="5" height="5"/><rect x="226" y="119" width="5" height="5"/><rect x="232" y="116" width="5" height="5"/><rect x="239" y="114" width="5" height="5"/><rect x="245" y="112" width="5" height="5"/><rect x="251" y="110" width="5" height="5"/><rect x="257" y="108" width="5" height="5"/><rect x="263" y="105" width="5" height="5"/><rect x="269" y="102" width="5" height="5"/><rect x="276" y="100" width="5" height="5"/><rect x="282" y="97" width="5" height="5"/><rect x="288" y="94" width="5" height="5"/><rect x="294" y="90" width="5" height="5"/><rect x="300" y="87" width="5" height="5"/><rect x="306" y="84" width="5" height="5"/><rect x="313" y="80" width="5" height="5"/><rect x="319" y="77" width="5" height="5"/><rect x="325" y="74" width="5" height="5"/><rect x="331" y="70" width="5" height="5"/><rect x="337" y="67" width="5" height="5"/><rect x="344" y="62" width="5" height="5"/><rect x="350" y="58" width="5" height="5"/><rect x="356" y="54" width="5" height="5"/><rect x="362" y="50" width="5" height="5"/><rect x="368" y="47" width="5" height="5"/><rect x="374" y="44" width="5" height="5"/><rect x="381" y="40" width="5" height="5"/><rect x="387" y="38" width="5" height="5"/></g><text x="425" y="30" class="ct">VDS =</text><text x="428.5" y="48.0" class="ct" fill="#FF0000">5.10</text><text x="428.5" y="66.2" class="ct" fill="#0000FF">10.1</text><text x="428.5" y="84.4" class="ct" fill="#006400">15.1</text><text x="428.5" y="102.6" class="ct" fill="#FF00FF">20.1</text><text x="428.5" y="120.8" class="ct" fill="#000000">25.1</text><rect x="428" y="129.0" width="26" height="12" fill="#fff"/><text x="428.5" y="139.0" class="ct" fill="#883A3A">30.1</text></svg>
<svg class="b" style="left:12px;top:93px" width="16" height="16" viewBox="0 0 16 16"><rect width="16" height="16" fill="#0A14F0"/><rect x="1" y="3" width="14" height="12" fill="#fff"/><rect x="12.5" y="0.8" width="2.2" height="1.4" fill="#ff3030" stroke="#fff" stroke-width="0.5"/><path d="M2.5 4 V13.5 H14" stroke="#000" stroke-width="1.4" fill="none"/><path d="M3.5 12.5 C4.5 8 6.5 4.8 9 4.6 H14" stroke="#00c000" stroke-width="1.2" fill="none"/><path d="M3.5 12.5 C5 10 6 8.6 7.5 8.5 H14" stroke="#1020ff" stroke-width="1.2" fill="none"/><path d="M3 12.5 C5 11.6 6 11.5 7 11.5 H14" stroke="#ff1010" stroke-width="1.3" fill="none"/></svg>
<div class="b" style="left:410px;top:91px;width:19px;height:19px;border:1px solid #fff;border-radius:3px;background:radial-gradient(circle at 30% 25%,#6C9CF8 0%,#3A6EE8 40%,#2454D8 75%,#1C46C4 100%);overflow:hidden"><div class="b" style="left:4px;top:12px;width:7px;height:3px;background:#fff"></div></div>
<div class="b" style="left:433px;top:91px;width:19px;height:19px;border:1px solid #fff;border-radius:3px;background:radial-gradient(circle at 30% 25%,#6C9CF8 0%,#3A6EE8 40%,#2454D8 75%,#1C46C4 100%);overflow:hidden"><div class="b" style="left:4px;top:4px;width:9px;height:7px;border:1px solid #fff;border-top-width:3px"></div></div>
<div class="b" style="left:456px;top:91px;width:19px;height:19px;border:1px solid #fff;border-radius:3px;background:radial-gradient(circle at 30% 25%,#F0A088 0%,#E0643C 35%,#D2441E 70%,#B83612 100%);overflow:hidden"><svg class="b" style="left:0;top:0" width="19" height="19"><path d="M4.8 4.8 L14.4 14.4 M14.4 4.8 L4.8 14.4" stroke="#fff" stroke-width="2.3" stroke-linecap="butt"/></svg></div>
<div class="b" style="left:4px;top:499px;width:954px;height:200px;background:#ECE9D8"></div>
<div class="b" style="left:4px;top:499px;width:954px;height:1px;background:#A8A590"></div>
<div class="b" style="left:4px;top:500px;width:954px;height:2px;background:#fff"></div>
<div class="b" style="left:4px;top:505px;width:954px;height:1px;background:#BDBAA6"></div>
<div class="b" style="left:293px;top:506px;width:1px;height:193px;background:#fff"></div>
<div class="b" style="left:294px;top:506px;width:1px;height:193px;background:#ECE9D8"></div>
<div class="b" style="left:295px;top:506px;width:1px;height:193px;background:#ACA899"></div>
<div class="b" style="left:300px;top:506px;width:1px;height:193px;background:#fff"></div>
<svg class="b" style="left:7px;top:512px" width="8" height="7"><path d="M1 0.8 L7 6.2 M7 0.8 L1 6.2" stroke="#000" stroke-width="1.7"/></svg>
<div class="b" style="left:5px;top:524px;width:13px;height:172px;background:linear-gradient(to bottom,#9CB4EA 0%,#8EA8E6 40%,#7A98E0 75%,#6E8EDC 100%)"></div>
<div class="b" style="left:19px;top:533px;width:266px;height:161px;background:linear-gradient(to bottom,#FDFDFB,#F6F5EE);border:1px solid #919B9C;box-sizing:border-box"></div>
<div class="b" style="left:76px;top:512px;width:52px;height:22px;background:linear-gradient(to bottom,#fff 0%,#F9F8F4 50%,#ECEAE0 100%);border:1px solid #919B9C;border-bottom:none;border-radius:3px 3px 0 0;box-sizing:border-box"></div>
<div class="b" style="left:20px;top:510px;width:57px;height:24px;background:#FDFDFB;border:1px solid #919B9C;border-bottom:none;border-radius:4px 4px 0 0;box-sizing:border-box;overflow:hidden"><div class="b" style="left:0;top:0;width:57px;height:1px;background:#E68B2C"></div><div class="b" style="left:0;top:1px;width:57px;height:2px;background:#FFC73C"></div></div>
<div class="b" style="left:27px;top:540px;width:250px;height:145px;background:#fff;border:1px solid #A5A295;border-right-color:#E8E6DC;border-bottom-color:#E8E6DC;box-sizing:border-box"></div>
<svg class="b" style="left:35px;top:545px" width="9" height="9"><rect x="0.5" y="0.5" width="8" height="8" fill="#fff" stroke="#8C959C"/><rect x="1" y="1" width="7" height="7" fill="#f4f4f0"/><path d="M2.5 4.5 H6.5" stroke="#000"/></svg>
<svg class="b" style="left:49px;top:540px" width="18" height="18"><circle cx="9" cy="9" r="7.5" fill="#fff" stroke="#ff2020" stroke-width="1"/><circle cx="9" cy="9" r="4" fill="none" stroke="#ff2020" stroke-width="1.3"/><circle cx="9" cy="9" r="1.5" fill="#ff2020"/></svg>
<div class="b" style="left:58px;top:558px;width:1px;height:3px;background:#b0b0b0"></div>
<svg class="b" style="left:54px;top:561px" width="9" height="9"><rect x="0.5" y="0.5" width="8" height="8" fill="#fff" stroke="#8C959C"/><rect x="1" y="1" width="7" height="7" fill="#f4f4f0"/><path d="M2.5 4.5 H6.5" stroke="#000"/><path d="M4.5 2.5 V6.5" stroke="#000"/></svg>
<div class="b" style="left:64px;top:565px;width:5px;height:1px;background:repeating-linear-gradient(to right,#999 0,#999 1px,transparent 1px,transparent 2px)"></div>
<svg class="b" style="left:68px;top:556px" width="18" height="16"><g transform="translate(1 2)" fill="none" stroke="#0A14F0" stroke-width="1.1"><path d="M0 9.3 H6.3 M2.5 9.3 V4.6 L5.6 1.3 H10 M3.8 9.8 L5.6 11.4 H10 M11.5 0 V12.5 M6.3 3 V9.5 M8.5 4 H11.5 M8.5 6.5 H14.5 M8.5 8.8 H11.5"/></g></svg>
<div class="b" style="left:88px;top:557px;width:188px;height:16px;background:#ECE9D8"></div>
<svg class="b" style="left:88px;top:557px" width="188" height="16"><text x="1.6" y="11" font-family="Liberation Serif" font-size="12" textLength="192" lengthAdjust="spacingAndGlyphs">3450A_1 - (W/L/T = 1.19e+3/10.3/27.0)</text></svg>
<div class="b" style="left:28px;top:669px;width:248px;height:16px;background:linear-gradient(to bottom,#EFEDE4,#FDFDFB 40%,#FDFDFB)"></div>
<div class="b" style="left:28px;top:670px;width:15px;height:15px;background:linear-gradient(to bottom,#CBDAFB,#B9CCF8 60%,#AFC4F6);border:1px solid #fff;border-radius:2px;box-sizing:border-box;box-shadow:0 0 0 0.5px #B4C8F0"><svg class="b" style="left:-1px;top:-1px" width="14" height="14"><path d="M8.5 3.5 L5 7 L8.5 10.5" fill="none" stroke="#4D6185" stroke-width="2"/></svg></div>
<div class="b" style="left:46px;top:670px;width:202px;height:15px;background:linear-gradient(to bottom,#C9D8FC,#C1D3FB 50%,#B5C9F7);border:1px solid #fff;border-radius:2px;box-sizing:border-box;box-shadow:0 0 0 0.5px #B4C8F0"><div class="b" style="left:97px;top:4px;width:1px;height:6px;background:#EEF4FE;box-shadow:1px 1px 0 #8CB0F8"></div><div class="b" style="left:99px;top:4px;width:1px;height:6px;background:#EEF4FE;box-shadow:1px 1px 0 #8CB0F8"></div><div class="b" style="left:101px;top:4px;width:1px;height:6px;background:#EEF4FE;box-shadow:1px 1px 0 #8CB0F8"></div><div class="b" style="left:103px;top:4px;width:1px;height:6px;background:#EEF4FE;box-shadow:1px 1px 0 #8CB0F8"></div></div>
<div class="b" style="left:260px;top:670px;width:15px;height:15px;background:linear-gradient(to bottom,#CBDAFB,#B9CCF8 60%,#AFC4F6);border:1px solid #fff;border-radius:2px;box-sizing:border-box;box-shadow:0 0 0 0.5px #B4C8F0"><svg class="b" style="left:-1px;top:-1px" width="14" height="14"><path d="M5.5 3.5 L9 7 L5.5 10.5" fill="none" stroke="#4D6185" stroke-width="2"/></svg></div>
<svg class="b" style="left:305px;top:512px" width="8" height="7"><path d="M1 0.8 L7 6.2 M7 0.8 L1 6.2" stroke="#000" stroke-width="1.7"/></svg>
<div class="b" style="left:303px;top:524px;width:13px;height:172px;background:linear-gradient(to bottom,#9CB4EA 0%,#8EA8E6 40%,#7A98E0 75%,#6E8EDC 100%)"></div>
<div class="b" style="left:317px;top:510px;width:645px;height:186px;background:#fff;border:1px solid #7A786C;box-sizing:border-box"></div>
<div class="b" style="left:318px;top:511px;width:643px;height:184px;background:#fff;border:1px solid #1C1C1C;box-sizing:border-box"></div>
<div class="b" style="left:319px;top:512px;width:639px;height:18px;background:linear-gradient(to bottom,#EFECDD 0%,#ECE9D8 80%,#DEDAC8 90%,#CBC7B8 100%)"></div>
<div class="b" style="left:369px;top:514px;width:1px;height:14px;background:#C5C2B2"></div>
<div class="b" style="left:370px;top:514px;width:1px;height:14px;background:#fff"></div>
<div class="b" style="left:490px;top:514px;width:1px;height:14px;background:#C5C2B2"></div>
<div class="b" style="left:491px;top:514px;width:1px;height:14px;background:#fff"></div>
<div class="b" style="left:591px;top:514px;width:1px;height:14px;background:#C5C2B2"></div>
<div class="b" style="left:592px;top:514px;width:1px;height:14px;background:#fff"></div>
<div class="b" style="left:319px;top:530px;width:622px;height:1px;background:#8A887C"></div>
<div class="b" style="left:319px;top:548px;width:622px;height:1px;background:#C8C8C8"></div>
<div class="b" style="left:319px;top:566px;width:622px;height:1px;background:#C8C8C8"></div>
<div class="b" style="left:319px;top:584px;width:622px;height:1px;background:#C8C8C8"></div>
<div class="b" style="left:319px;top:602px;width:622px;height:1px;background:#C8C8C8"></div>
<div class="b" style="left:319px;top:621px;width:622px;height:1px;background:#C8C8C8"></div>
<div class="b" style="left:319px;top:639px;width:622px;height:1px;background:#C8C8C8"></div>
<div class="b" style="left:319px;top:657px;width:622px;height:1px;background:#C8C8C8"></div>
<div class="b" style="left:319px;top:675px;width:622px;height:1px;background:#C8C8C8"></div>
<div class="b" style="left:370px;top:531px;width:1px;height:144px;background:#C8C8C8"></div>
<div class="b" style="left:491px;top:531px;width:1px;height:144px;background:#C8C8C8"></div>
<div class="b" style="left:592px;top:531px;width:1px;height:144px;background:#C8C8C8"></div>
<div class="b" style="left:941px;top:512px;width:17px;height:164px;background:linear-gradient(to right,#EFEDE4,#FDFDFB 40%,#FDFDFB)"></div>
<div class="b" style="left:942px;top:514px;width:14px;height:15px;background:linear-gradient(to bottom,#CBDAFB,#B9CCF8 60%,#AFC4F6);border:1px solid #fff;border-radius:2px;box-sizing:border-box;box-shadow:0 0 0 0.5px #B4C8F0"><svg class="b" style="left:-1px;top:-1px" width="14" height="14"><path d="M3.5 8.5 L7 5 L10.5 8.5" fill="none" stroke="#4D6185" stroke-width="2"/></svg></div>
<div class="b" style="left:942px;top:596px;width:14px;height:62px;background:linear-gradient(to right,#C9D8FC,#C1D3FB 50%,#B5C9F7);border:1px solid #fff;border-radius:2px;box-sizing:border-box;box-shadow:0 0 0 0.5px #B4C8F0"><div class="b" style="top:27px;left:4px;height:1px;width:6px;background:#EEF4FE;box-shadow:1px 1px 0 #8CB0F8"></div><div class="b" style="top:29px;left:4px;height:1px;width:6px;background:#EEF4FE;box-shadow:1px 1px 0 #8CB0F8"></div><div class="b" style="top:31px;left:4px;height:1px;width:6px;background:#EEF4FE;box-shadow:1px 1px 0 #8CB0F8"></div><div class="b" style="top:33px;left:4px;height:1px;width:6px;background:#EEF4FE;box-shadow:1px 1px 0 #8CB0F8"></div></div>
<div class="b" style="left:942px;top:660px;width:14px;height:15px;background:linear-gradient(to bottom,#CBDAFB,#B9CCF8 60%,#AFC4F6);border:1px solid #fff;border-radius:2px;box-sizing:border-box;box-shadow:0 0 0 0.5px #B4C8F0"><svg class="b" style="left:-1px;top:-1px" width="14" height="14"><path d="M3.5 5.5 L7 9 L10.5 5.5" fill="none" stroke="#4D6185" stroke-width="2"/></svg></div>
<div class="b" style="left:319px;top:676px;width:622px;height:18px;background:linear-gradient(to bottom,#EFEDE4,#FDFDFB 40%,#FDFDFB)"></div>
<div class="b" style="left:941px;top:676px;width:17px;height:18px;background:#ECE9D8"></div>
<div class="b" style="left:321px;top:678px;width:15px;height:15px;background:linear-gradient(to bottom,#CBDAFB,#B9CCF8 60%,#AFC4F6);border:1px solid #fff;border-radius:2px;box-sizing:border-box;box-shadow:0 0 0 0.5px #B4C8F0"><svg class="b" style="left:-1px;top:-1px" width="14" height="14"><path d="M8.5 3.5 L5 7 L8.5 10.5" fill="none" stroke="#4D6185" stroke-width="2"/></svg></div>
<div class="b" style="left:338px;top:678px;width:467px;height:15px;background:linear-gradient(to bottom,#C9D8FC,#C1D3FB 50%,#B5C9F7);border:1px solid #fff;border-radius:2px;box-sizing:border-box;box-shadow:0 0 0 0.5px #B4C8F0"><div class="b" style="left:229px;top:4px;width:1px;height:6px;background:#EEF4FE;box-shadow:1px 1px 0 #8CB0F8"></div><div class="b" style="left:231px;top:4px;width:1px;height:6px;background:#EEF4FE;box-shadow:1px 1px 0 #8CB0F8"></div><div class="b" style="left:233px;top:4px;width:1px;height:6px;background:#EEF4FE;box-shadow:1px 1px 0 #8CB0F8"></div><div class="b" style="left:235px;top:4px;width:1px;height:6px;background:#EEF4FE;box-shadow:1px 1px 0 #8CB0F8"></div></div>
<div class="b" style="left:924px;top:678px;width:15px;height:15px;background:linear-gradient(to bottom,#CBDAFB,#B9CCF8 60%,#AFC4F6);border:1px solid #fff;border-radius:2px;box-sizing:border-box;box-shadow:0 0 0 0.5px #B4C8F0"><svg class="b" style="left:-1px;top:-1px" width="14" height="14"><path d="M5.5 3.5 L9 7 L5.5 10.5" fill="none" stroke="#4D6185" stroke-width="2"/></svg></div>
<div class="b" style="left:4px;top:699px;width:954px;height:1px;background:#B4B0A0"></div>
<div class="b" style="left:4px;top:700px;width:954px;height:1px;background:#fff"></div>
<div class="b" style="left:4px;top:701px;width:954px;height:1px;background:#D2CEBC"></div>
<div class="b" style="left:4px;top:702px;width:954px;height:18px;background:linear-gradient(to bottom,#E8E5D2,#ECE9D8 30%,#ECE9D8)"></div>
<div class="b" style="left:840px;top:704px;width:1px;height:16px;background:#C5C2B2"></div>
<div class="b" style="left:841px;top:704px;width:1px;height:16px;background:#fff"></div>
<div class="b" style="left:872px;top:704px;width:1px;height:16px;background:#C5C2B2"></div>
<div class="b" style="left:873px;top:704px;width:1px;height:16px;background:#fff"></div>
<div class="b" style="left:906px;top:704px;width:1px;height:16px;background:#C5C2B2"></div>
<div class="b" style="left:907px;top:704px;width:1px;height:16px;background:#fff"></div>
<div class="b" style="left:942px;top:704px;width:1px;height:16px;background:#C5C2B2"></div>
<div class="b" style="left:943px;top:704px;width:1px;height:16px;background:#fff"></div>
<svg class="b" style="left:944px;top:706px" width="14" height="14"><g fill="#B8B4A4"><rect x="10" y="10" width="2" height="2"/><rect x="6" y="10" width="2" height="2"/><rect x="10" y="6" width="2" height="2"/><rect x="2" y="10" width="2" height="2"/><rect x="6" y="6" width="2" height="2"/><rect x="10" y="2" width="2" height="2"/></g></svg>
<svg class="b" style="left:0;top:0" width="958" height="720" viewBox="0 0 958 720"><text x="28" y="22" font-family="Liberation Serif" font-size="13.5" fill="#0A2A8C" font-weight="bold" textLength="266.5" lengthAdjust="spacingAndGlyphs">TFT ProTractor - AmorphousSi TFT - New.tecp</text><text x="27" y="21" font-family="Liberation Serif" font-size="13.5" fill="#fff" font-weight="bold" textLength="266.5" lengthAdjust="spacingAndGlyphs">TFT ProTractor - AmorphousSi TFT - New.tecp</text><text x="10" y="44" font-family="Liberation Serif" font-size="12.5" fill="#000" textLength="16" lengthAdjust="spacingAndGlyphs"><tspan text-decoration="underline">F</tspan>ile</text><text x="39.3" y="44" font-family="Liberation Serif" font-size="12.5" fill="#000" textLength="22.7" lengthAdjust="spacingAndGlyphs"><tspan text-decoration="underline">V</tspan>iew</text><text x="76" y="44" font-family="Liberation Serif" font-size="12.5" fill="#000" textLength="51" lengthAdjust="spacingAndGlyphs"><tspan text-decoration="underline">W</tspan>orkspace</text><text x="140" y="44" font-family="Liberation Serif" font-size="12.5" fill="#000" textLength="47.7" lengthAdjust="spacingAndGlyphs">E<tspan text-decoration="underline">x</tspan>traction</text><text x="200" y="44" font-family="Liberation Serif" font-size="12.5" fill="#000" textLength="55.4" lengthAdjust="spacingAndGlyphs"><tspan text-decoration="underline">V</tspan>erification</text><text x="268" y="44" font-family="Liberation Serif" font-size="12.5" fill="#000" textLength="22" lengthAdjust="spacingAndGlyphs"><tspan text-decoration="underline">T</tspan>ool</text><text x="302.6" y="44" font-family="Liberation Serif" font-size="12.5" fill="#000" textLength="38.4" lengthAdjust="spacingAndGlyphs"><tspan text-decoration="underline">W</tspan>indow</text><text x="355" y="44" font-family="Liberation Serif" font-size="12.5" fill="#000" textLength="21" lengthAdjust="spacingAndGlyphs"><tspan text-decoration="underline">H</tspan>elp</text><text x="510" y="106" font-family="Liberation Serif" font-size="13.5" fill="#DCE6FA" font-weight="bold" textLength="271" lengthAdjust="spacingAndGlyphs">ID-VG - 3450A_1 (W/L/T = 1.19e+3/10.3/27.0)</text><text x="32" y="313" font-family="Liberation Serif" font-size="13.5" fill="#DCE6FA" font-weight="bold" textLength="271" lengthAdjust="spacingAndGlyphs">ID-VD - 3450A_1 (W/L/T = 1.19e+3/10.3/27.0)</text><text x="510" y="313" font-family="Liberation Serif" font-size="13.5" fill="#DCE6FA" font-weight="bold" textLength="271" lengthAdjust="spacingAndGlyphs">ID-VD - 3450A_1 (W/L/T = 1.19e+3/10.3/27.0)</text><text x="33" y="107" font-family="Liberation Serif" font-size="13.5" fill="#0A2A8C" font-weight="bold" textLength="271" lengthAdjust="spacingAndGlyphs">ID-VG - 3450A_1 (W/L/T = 1.19e+3/10.3/27.0)</text><text x="32" y="106" font-family="Liberation Serif" font-size="13.5" fill="#fff" font-weight="bold" textLength="271" lengthAdjust="spacingAndGlyphs">ID-VG - 3450A_1 (W/L/T = 1.19e+3/10.3/27.0)</text><text transform="translate(15.5 693) rotate(-90)" font-family="Liberation Sans" font-size="11.5" fill="#D8E2F8" textLength="53" lengthAdjust="spacingAndGlyphs">Workspace</text><text x="81.6" y="529" font-family="Liberation Sans" font-size="13" fill="#000" font-weight="bold" textLength="28.7" lengthAdjust="spacingAndGlyphs">Step</text><text x="27" y="527" font-family="Liberation Sans" font-size="13" fill="#000" font-weight="bold" textLength="31" lengthAdjust="spacingAndGlyphs">Task</text><text x="72" y="552.5" font-family="Liberation Serif" font-size="12" fill="#000" textLength="28" lengthAdjust="spacingAndGlyphs">Task 1</text><text transform="translate(313.5 693.5) rotate(-90)" font-family="Liberation Sans" font-size="11.5" fill="#D8E2F8" textLength="56" lengthAdjust="spacingAndGlyphs">Information</text><text x="323" y="526" font-family="Liberation Serif" font-size="12" fill="#000" textLength="12" lengthAdjust="spacingAndGlyphs">ID</text><text x="375.6" y="526" font-family="Liberation Serif" font-size="12" fill="#000" textLength="22.7" lengthAdjust="spacingAndGlyphs">Time</text><text x="496" y="526" font-family="Liberation Serif" font-size="12" fill="#000" textLength="23.3" lengthAdjust="spacingAndGlyphs">Type</text><text x="595.6" y="526" font-family="Liberation Serif" font-size="12" fill="#000" textLength="28.4" lengthAdjust="spacingAndGlyphs">Event</text><text x="323" y="543.7" font-family="Liberation Serif" font-size="12" fill="#000" textLength="6" lengthAdjust="spacingAndGlyphs">9</text><text x="373.8" y="543.7" font-family="Liberation Serif" font-size="12" fill="#000" textLength="76" lengthAdjust="spacingAndGlyphs">Jun 29 19:31:57</text><text x="494.8" y="543.7" font-family="Liberation Serif" font-size="12" fill="#000" textLength="56.4" lengthAdjust="spacingAndGlyphs">Information</text><text x="595" y="543.7" font-family="Liberation Serif" font-size="12" fill="#000" textLength="198" lengthAdjust="spacingAndGlyphs">Done - Task 1 - Extract Threshold Region</text><text x="323" y="561.7" font-family="Liberation Serif" font-size="12" fill="#000" textLength="12" lengthAdjust="spacingAndGlyphs">10</text><text x="373.8" y="561.7" font-family="Liberation Serif" font-size="12" fill="#000" textLength="76" lengthAdjust="spacingAndGlyphs">Jun 29 19:31:57</text><text x="494.8" y="561.7" font-family="Liberation Serif" font-size="12" fill="#000" textLength="56.4" lengthAdjust="spacingAndGlyphs">Information</text><text x="595" y="561.7" font-family="Liberation Serif" font-size="12" fill="#000" textLength="256" lengthAdjust="spacingAndGlyphs">Run - Task 1 - Extract Mobility and Saturation Region</text><text x="323" y="579.7" font-family="Liberation Serif" font-size="12" fill="#000" textLength="12" lengthAdjust="spacingAndGlyphs">11</text><text x="373.8" y="579.7" font-family="Liberation Serif" font-size="12" fill="#000" textLength="76" lengthAdjust="spacingAndGlyphs">Jun 29 19:31:58</text><text x="494.8" y="579.7" font-family="Liberation Serif" font-size="12" fill="#000" textLength="56.4" lengthAdjust="spacingAndGlyphs">Information</text><text x="595" y="579.7" font-family="Liberation Serif" font-size="12" fill="#000" textLength="260.7" lengthAdjust="spacingAndGlyphs">Done - Task 1 - Extract Mobility and Saturation Region</text><text x="323" y="597.7" font-family="Liberation Serif" font-size="12" fill="#000" textLength="12" lengthAdjust="spacingAndGlyphs">12</text><text x="373.8" y="597.7" font-family="Liberation Serif" font-size="12" fill="#000" textLength="76" lengthAdjust="spacingAndGlyphs">Jun 29 19:31:58</text><text x="494.8" y="597.7" font-family="Liberation Serif" font-size="12" fill="#000" textLength="56.4" lengthAdjust="spacingAndGlyphs">Information</text><text x="595" y="597.7" font-family="Liberation Serif" font-size="12" fill="#000" textLength="174" lengthAdjust="spacingAndGlyphs">Run - Task 1 - Extract I-OFF Region</text><text x="323" y="616.7" font-family="Liberation Serif" font-size="12" fill="#000" textLength="12" lengthAdjust="spacingAndGlyphs">13</text><text x="373.8" y="616.7" font-family="Liberation Serif" font-size="12" fill="#000" textLength="76" lengthAdjust="spacingAndGlyphs">Jun 29 19:31:59</text><text x="494.8" y="616.7" font-family="Liberation Serif" font-size="12" fill="#000" textLength="56.4" lengthAdjust="spacingAndGlyphs">Information</text><text x="595" y="616.7" font-family="Liberation Serif" font-size="12" fill="#000" textLength="178.8" lengthAdjust="spacingAndGlyphs">Done - Task 1 - Extract I-OFF Region</text><text x="323" y="634.7" font-family="Liberation Serif" font-size="12" fill="#5C5CEC" textLength="12" lengthAdjust="spacingAndGlyphs">14</text><text x="373.8" y="634.7" font-family="Liberation Serif" font-size="12" fill="#5C5CEC" textLength="76" lengthAdjust="spacingAndGlyphs">Jun 29 19:31:59</text><text x="494.8" y="634.7" font-family="Liberation Serif" font-size="12" fill="#5C5CEC" textLength="56.4" lengthAdjust="spacingAndGlyphs">Information</text><text x="595" y="634.7" font-family="Liberation Serif" font-size="12" fill="#5C5CEC" textLength="183.8" lengthAdjust="spacingAndGlyphs">Done - Single task automatic extraction</text><text x="323" y="652.7" font-family="Liberation Serif" font-size="12" fill="#00C000" textLength="12" lengthAdjust="spacingAndGlyphs">15</text><text x="373.8" y="652.7" font-family="Liberation Serif" font-size="12" fill="#00C000" textLength="76" lengthAdjust="spacingAndGlyphs">Jun 29 19:31:59</text><text x="494.8" y="652.7" font-family="Liberation Serif" font-size="12" fill="#00C000" textLength="56.4" lengthAdjust="spacingAndGlyphs">Information</text><text x="595" y="652.7" font-family="Liberation Serif" font-size="12" fill="#00C000" textLength="199.7" lengthAdjust="spacingAndGlyphs">Save workspace (C:\New\Backup-temp\0\)</text><text x="323" y="670.7" font-family="Liberation Serif" font-size="12" fill="#5C5CEC" textLength="12" lengthAdjust="spacingAndGlyphs">16</text><text x="373.8" y="670.7" font-family="Liberation Serif" font-size="12" fill="#5C5CEC" textLength="76" lengthAdjust="spacingAndGlyphs">Jun 29 19:31:59</text><text x="494.8" y="670.7" font-family="Liberation Serif" font-size="12" fill="#5C5CEC" textLength="56.4" lengthAdjust="spacingAndGlyphs">Information</text><text x="595" y="670.7" font-family="Liberation Serif" font-size="12" fill="#5C5CEC" textLength="109.7" lengthAdjust="spacingAndGlyphs">Done - Save workspace</text><text x="5.6" y="714" font-family="Liberation Serif" font-size="12" fill="#000" textLength="30" lengthAdjust="spacingAndGlyphs">Ready</text><text x="877" y="714" font-family="Liberation Serif" font-size="12" fill="#000" textLength="25" lengthAdjust="spacingAndGlyphs">NUM</text></svg>
</body></html>
